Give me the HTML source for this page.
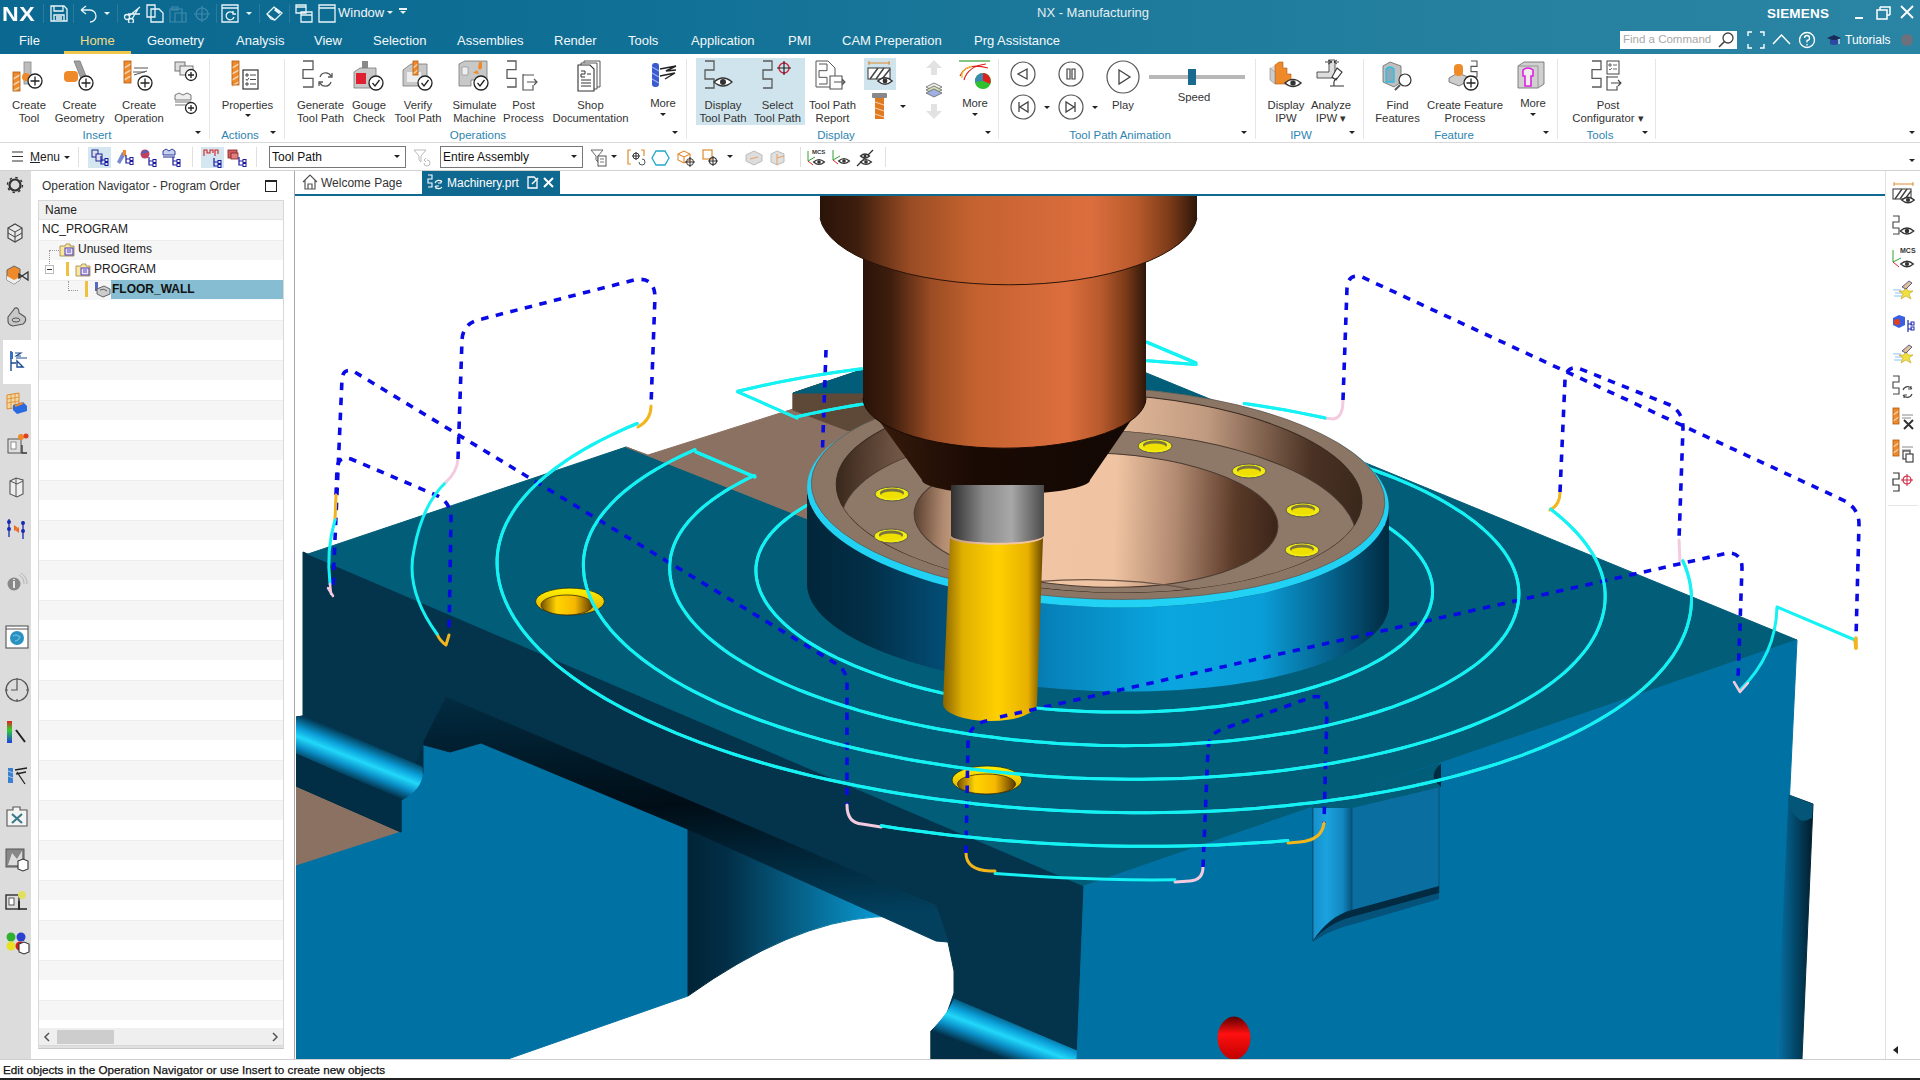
<!DOCTYPE html>
<html><head><meta charset="utf-8">
<style>
*{margin:0;padding:0;box-sizing:border-box}
html,body{width:1920px;height:1080px;overflow:hidden;background:#fff;font-family:"Liberation Sans",sans-serif;}
.a{position:absolute}
#title{left:0;top:0;width:1920px;height:54px;background:linear-gradient(90deg,#0b6890 0%,#0f6f95 30%,#25809f 75%,#2a84a4 100%)}
#ribbon{left:0;top:54px;width:1920px;height:89px;background:#fff;border-bottom:1px solid #d9d9d9}
#tb{left:0;top:143px;width:1920px;height:28px;background:#fff;border-bottom:1px solid #d2d2d2}
#side{left:0;top:171px;width:31px;height:888px;background:#dcdcdc}
#nav{left:31px;top:171px;width:265px;height:888px;background:#fff}
#status{left:0;top:1059px;width:1920px;height:21px;background:#fff;border-top:1px solid #cfcfcf;border-bottom:2px solid #222}
#rside{left:1885px;top:171px;width:35px;height:888px;background:#fff;border-left:1px solid #e0e0e0}
</style></head><body>
<div id="title" class="a"></div>
<div id="ribbon" class="a"></div>
<div id="tb" class="a"></div>
<div id="side" class="a"></div>
<div id="nav" class="a"></div>
<div id="rside" class="a"></div>
<svg class="a" style="left:296px;top:195px" width="1589" height="864" viewBox="296 195 1589 864">
<defs>
<linearGradient id="gRail" x1="362" y1="740" x2="347" y2="778" gradientUnits="userSpaceOnUse"><stop offset="0" stop-color="#023a55"/><stop offset="0.3" stop-color="#0a9ed8"/><stop offset="0.5" stop-color="#22d8fa"/><stop offset="0.72" stop-color="#0a90c8"/><stop offset="1" stop-color="#022e46"/></linearGradient><linearGradient id="gRail2" x1="1010" y1="1015" x2="995" y2="1055" gradientUnits="userSpaceOnUse"><stop offset="0" stop-color="#023a55"/><stop offset="0.3" stop-color="#0a9ed8"/><stop offset="0.5" stop-color="#22d8fa"/><stop offset="0.72" stop-color="#0a90c8"/><stop offset="1" stop-color="#022e46"/></linearGradient>
<linearGradient id="gHole" x1="688" y1="0" x2="944" y2="0" gradientUnits="userSpaceOnUse"><stop offset="0" stop-color="#012436"/><stop offset="0.15" stop-color="#022e46"/><stop offset="0.75" stop-color="#0a9ad2"/><stop offset="1" stop-color="#0b86b8"/></linearGradient>
<linearGradient id="gChan" x1="0" y1="0" x2="0.15" y2="1"><stop offset="0" stop-color="#022c42"/><stop offset="0.5" stop-color="#000d16"/><stop offset="1" stop-color="#02405e"/></linearGradient>
<linearGradient id="gRingSide" x1="807" y1="0" x2="1389" y2="0" gradientUnits="userSpaceOnUse"><stop offset="0" stop-color="#01263a"/><stop offset="0.1" stop-color="#022e46"/><stop offset="0.25" stop-color="#03507a"/><stop offset="0.42" stop-color="#0782ba"/><stop offset="0.62" stop-color="#0aa6e0"/><stop offset="0.78" stop-color="#0a9ed8"/><stop offset="0.9" stop-color="#05628c"/><stop offset="1" stop-color="#012a40"/></linearGradient>
<linearGradient id="gSp" x1="0" y1="0" x2="1" y2="0"><stop offset="0" stop-color="#2a1308"/><stop offset="0.1" stop-color="#3e1e0e"/><stop offset="0.24" stop-color="#9a4c24"/><stop offset="0.4" stop-color="#c4622f"/><stop offset="0.72" stop-color="#dc6e3e"/><stop offset="0.84" stop-color="#b85a2c"/><stop offset="0.93" stop-color="#7a3a18"/><stop offset="1" stop-color="#2e160a"/></linearGradient>
<linearGradient id="gCone" x1="0" y1="0" x2="1" y2="0"><stop offset="0" stop-color="#3a1c0c"/><stop offset="0.4" stop-color="#1a0a04"/><stop offset="1" stop-color="#120804"/></linearGradient>
<linearGradient id="gHold" x1="0" y1="0" x2="1" y2="0"><stop offset="0" stop-color="#303030"/><stop offset="0.35" stop-color="#8a8a8a"/><stop offset="0.65" stop-color="#a8a8a8"/><stop offset="1" stop-color="#4a4a4a"/></linearGradient>
<linearGradient id="gTool" x1="0" y1="0" x2="1" y2="0"><stop offset="0" stop-color="#8a6400"/><stop offset="0.2" stop-color="#e0b000"/><stop offset="0.55" stop-color="#ffd000"/><stop offset="0.85" stop-color="#e8b000"/><stop offset="1" stop-color="#6a4a00"/></linearGradient>
<linearGradient id="gBore" x1="915" y1="0" x2="1280" y2="0" gradientUnits="userSpaceOnUse"><stop offset="0" stop-color="#5a4030"/><stop offset="0.08" stop-color="#b08a70"/><stop offset="0.2" stop-color="#f2c6a4"/><stop offset="0.55" stop-color="#f0c4a2"/><stop offset="0.72" stop-color="#b08870"/><stop offset="0.88" stop-color="#5a3a28"/><stop offset="1" stop-color="#3a2418"/></linearGradient>
<linearGradient id="gInW" x1="836" y1="0" x2="1362" y2="0" gradientUnits="userSpaceOnUse"><stop offset="0" stop-color="#3a281c"/><stop offset="0.1" stop-color="#6a5040"/><stop offset="0.45" stop-color="#f2c6a4"/><stop offset="0.7" stop-color="#c09a80"/><stop offset="0.9" stop-color="#4a3224"/><stop offset="1" stop-color="#3a281c"/></linearGradient>
<linearGradient id="gHoleO" x1="0" y1="0" x2="0" y2="1"><stop offset="0" stop-color="#fff200"/><stop offset="1" stop-color="#e0a800"/></linearGradient><linearGradient id="gHoleI" x1="0" y1="0" x2="1" y2="0"><stop offset="0" stop-color="#7a5000"/><stop offset="0.3" stop-color="#ffd400"/><stop offset="0.65" stop-color="#f6b800"/><stop offset="1" stop-color="#5a3800"/></linearGradient>
<linearGradient id="gRedH" x1="0" y1="0" x2="0" y2="1"><stop offset="0" stop-color="#600000"/><stop offset="0.4" stop-color="#ff1010"/><stop offset="1" stop-color="#c00000"/></linearGradient>
<linearGradient id="gSlot" x1="0" y1="0" x2="1" y2="0"><stop offset="0" stop-color="#1690cc"/><stop offset="0.35" stop-color="#1ba2de"/><stop offset="0.75" stop-color="#1288c2"/><stop offset="1" stop-color="#07547e"/></linearGradient>
<linearGradient id="gRRail" x1="0" y1="0" x2="1" y2="0"><stop offset="0" stop-color="#0872a6"/><stop offset="0.45" stop-color="#034c70"/><stop offset="1" stop-color="#011c2a"/></linearGradient>
</defs>
<rect x="296" y="195" width="1589" height="864" fill="#fff"/>
<polygon points="296,786 401,832 296,866" fill="#8b7161" stroke="#8b7161" stroke-width="1"/>
<polygon points="424,735 401,800 401,832 424,773" fill="#022e45" stroke="#022e45" stroke-width="1"/>
<polygon points="296,866 401,832 401,800 424,773 424,745 450,752 481,743 690,830 688,996 508,1059 296,1059" fill="#0071a3" stroke="#0071a3" stroke-width="1"/>
<path d="M688,826 L936,937 L948,942 Q920,913 875,917 Q790,923 688,996 Z" fill="url(#gHole)" stroke="url(#gHole)" stroke-width="1"/>
<polygon points="303,552 1084,884 1077,1059 931,1059 931,1031 945,1019 954,993 954,971 948,942 936,906 880,882 690,801 446,697 424,741 401,800 401,832 296,786 296,717 303,716" fill="#03344c" stroke="#03344c" stroke-width="1"/>
<polygon points="446,697 690,801 880,882 936,906 948,942 936,941 690,830 481,743 450,752 424,745 424,741" fill="url(#gChan)" stroke="url(#gChan)" stroke-width="1"/>
<path d="M296,717 L303,716 L422,767 C424,780 418,792 401,800 L296,754 Z" fill="url(#gRail)" stroke="url(#gRail)" stroke-width="1"/>
<polygon points="296,754 401,800 401,832 296,786" fill="#022e45" stroke="#022e45" stroke-width="1"/>
<path d="M931,1031 C940,1022 950,1010 954,999 L1077,1051 L1077,1059 L931,1059 Z" fill="url(#gRail2)" stroke="url(#gRail2)" stroke-width="1"/>
<polygon points="308,554 626,447 805,518 870,520 1000,420 1144,372 1797,640 1084,886" fill="#025d78" stroke="#025d78" stroke-width="1"/>
<polygon points="626,447 648,455 793,409 793,393 861,370 880,372 880,540 805,518" fill="#8b7161" stroke="#8b7161" stroke-width="1"/>
<polygon points="793,393 880,364 880,437 846,430 793,410" fill="#5e4838" stroke="#5e4838" stroke-width="1"/>
<polygon points="793,393 861,370 900,356 900,372 863,393" fill="#025d78" stroke="#025d78" stroke-width="1"/>
<polygon points="1084,886 1797,640 1777,1059 1077,1059" fill="#0071a3" stroke="#0071a3" stroke-width="1"/>
<polygon points="1313,807 1439,764 1439,893 1352,917 1313,941" fill="#0a6fa0" stroke="#044a6a" stroke-width="0.8"/>
<path d="M1313,807 L1352,794 L1352,917 C1335,921 1320,930 1313,941 Z" fill="url(#gSlot)" stroke="#044a6a" stroke-width="0.8"/>
<path d="M1313,941 C1322,926 1336,914 1352,910 L1439,886 L1439,893 L1352,917 C1336,921 1322,930 1313,941 Z" fill="#022a40"/>
<path d="M1313,941 C1322,930 1336,921 1352,917 L1439,893 L1439,899 L1354,924 C1338,928 1324,934 1313,941 Z" fill="#05527a"/>
<polygon points="1310,808 1441,763 1441,787 1352,808" fill="#025d78"/>
<path d="M1441,764 Q1432,770 1434,780 L1441,787 Z" fill="#022a40"/>
<polygon points="1789,795 1813,804 1802,1059 1777,1059" fill="url(#gRRail)" stroke="url(#gRRail)" stroke-width="1"/>
<path d="M1789,795 L1813,804 L1812,818 Q1805,822 1800,820 Q1792,814 1789,805 Z" fill="#035678"/>
<ellipse cx="1234" cy="1038" rx="16" ry="21" fill="url(#gRedH)" stroke="url(#gRedH)" stroke-width="1"/>
<ellipse cx="570" cy="601.5" rx="34.4" ry="13.4" fill="url(#gHoleO)" stroke="#1a2a20" stroke-width="0.8"/>
<ellipse cx="567" cy="605" rx="26" ry="10" fill="url(#gHoleI)" stroke="#3a3010" stroke-width="0.8"/>
<ellipse cx="987" cy="780" rx="35" ry="14" fill="url(#gHoleO)" stroke="#1a2a20" stroke-width="0.8"/>
<ellipse cx="986.5" cy="784" rx="29" ry="10" fill="url(#gHoleI)" stroke="#3a3010" stroke-width="0.8"/>
<path d="M1094.0,454.6 L1102.9,455.0 L1111.7,455.3 L1120.6,455.8 L1129.4,456.4 L1138.2,457.1 L1147.0,457.8 L1155.7,458.6 L1164.4,459.5 L1173.0,460.5 L1181.6,461.6 L1190.1,462.7 L1198.6,464.0 L1207.0,465.3 L1215.3,466.7 L1223.5,468.2 L1231.7,469.7 L1239.7,471.3 L1247.7,473.0 L1255.5,474.8 L1263.2,476.6 L1270.9,478.6 L1278.3,480.5 L1285.7,482.6 L1293.0,484.7 L1300.1,486.9 L1307.0,489.2 L1313.8,491.5 L1320.5,493.9 L1327.0,496.3 L1333.4,498.8 L1339.5,501.3 L1345.6,503.9 L1351.4,506.6 L1357.1,509.3 L1362.6,512.1 L1367.9,514.9 L1373.0,517.7 L1377.9,520.6 L1382.6,523.5 L1387.2,526.5 L1391.5,529.5 L1395.6,532.5 L1399.6,535.6 L1403.3,538.7 L1406.8,541.9 L1410.1,545.0 L1413.1,548.2 L1416.0,551.4 L1418.6,554.7 L1421.0,557.9 L1423.2,561.2 L1425.2,564.4 L1426.9,567.7 L1428.4,571.0 L1429.7,574.3 L1430.7,577.6 L1431.6,580.9 L1432.2,584.2 L1432.5,587.5 L1432.6,590.8 L1432.5,594.3 L1432.2,597.7 L1431.6,601.1 L1430.8,604.5 L1429.8,607.9 L1428.5,611.2 L1427.0,614.6 L1425.3,617.9 L1423.3,621.2 L1421.2,624.4 L1418.8,627.7 L1416.1,630.9 L1413.3,634.0 L1410.2,637.2 L1407.0,640.2 L1403.5,643.3 L1399.8,646.3 L1395.9,649.3 L1391.7,652.2 L1387.4,655.0 L1382.9,657.9 L1378.2,660.6 L1373.3,663.3 L1368.2,666.0 L1362.9,668.6 L1357.4,671.1 L1351.7,673.6 L1345.9,676.0 L1339.9,678.3 L1333.7,680.6 L1327.4,682.8 L1320.9,684.9 L1314.2,687.0 L1307.4,689.0 L1300.5,690.9 L1293.4,692.7 L1286.1,694.5 L1278.8,696.2 L1271.3,697.8 L1263.7,699.3 L1255.9,700.7 L1248.1,702.1 L1240.2,703.4 L1232.1,704.6 L1224.0,705.7 L1215.8,706.7 L1207.5,707.6 L1199.1,708.5 L1190.6,709.2 L1182.1,709.9 L1173.5,710.5 L1164.9,711.0 L1156.2,711.4 L1147.5,711.7 L1138.7,711.9 L1129.9,712.1 L1121.1,712.1 L1112.2,712.1 L1103.4,711.9 L1094.5,711.7 L1085.7,711.4 L1076.8,711.0 L1068.0,710.5 L1059.2,709.9 L1050.4,709.3 L1041.6,708.5 L1032.9,707.7 L1024.2,706.7 L1015.5,705.7 L1007.0,704.6 L998.4,703.4 L990.0,702.1 L981.6,700.8 L973.3,699.3 L965.0,697.8 L956.9,696.2 L948.8,694.5 L940.9,692.8 L933.1,690.9 L925.3,689.0 L917.7,687.0 L910.2,685.0 L902.8,682.8 L895.6,680.6 L888.5,678.4 L881.5,676.0 L874.7,673.6 L868.1,671.2 L861.6,668.6 L855.2,666.1 L849.0,663.4 L843.0,660.7 L837.2,658.0 L831.5,655.1 L826.0,652.3 L820.7,649.4 L815.6,646.4 L810.7,643.4 L805.9,640.4 L801.4,637.3 L797.1,634.1 L792.9,631.0 L789.0,627.8 L785.3,624.6 L781.8,621.3 L778.5,618.0 L775.4,614.7 L772.6,611.4 L769.9,608.0 L767.5,604.6 L765.3,601.2 L763.4,597.8 L761.6,594.4 L760.1,591.0 L758.9,587.5 L757.8,584.1 L757.0,580.7 L756.4,577.2 L756.1,573.8 L755.9,570.3 L756.0,567.0 L756.4,563.8 L757.0,560.5 L757.8,557.2 L758.8,554.0 L760.1,550.8 L761.5,547.6 L763.3,544.4 L765.2,541.2 L767.4,538.1 L769.8,535.0 L772.4,531.9 L775.3,528.9 L778.3,525.9 L781.6,522.9 L785.1,520.0 L788.8,517.1 L792.7,514.3 L796.8,511.5 L801.1,508.7 L805.7,506.0 L810.4,503.4 L815.3,500.8 L820.4,498.3 L825.7,495.8 L831.2,493.4 L836.8,491.0 L842.7,488.7 L848.7,486.5 L854.9,484.3 L861.2,482.2 L867.7,480.1 L874.3,478.2 L881.2,476.3 L888.1,474.4 L895.2,472.7 L902.4,471.0 L909.8,469.4 L917.3,467.8 L924.9,466.4 L932.6,465.0 L940.4,463.7 L948.4,462.5 L956.4,461.4 L964.6,460.3 L972.8,459.3 L981.1,458.4 L989.5,457.6 L997.9,456.9 L1006.5,456.3 L1015.0,455.7 L1023.7,455.3 L1032.4,454.9 L1041.1,454.6 L1049.9,454.4 L1058.7,454.3 L1067.5,454.2 L1076.3,454.3 L1085.2,454.4 L1094.0,454.6" fill="none" stroke="#16f2f4" stroke-width="3" stroke-linecap="round" stroke-linejoin="round"/>
<path d="M754.3,475.5 L747.7,478.6 L741.4,481.9 L735.3,485.2 L729.5,488.5 L723.9,491.9 L718.6,495.4 L713.5,499.0 L708.7,502.6 L704.2,506.2 L699.9,509.9 L695.9,513.7 L692.2,517.5 L688.7,521.3 L685.6,525.2 L682.7,529.1 L680.1,533.1 L677.8,537.0 L675.7,541.1 L674.0,545.1 L672.6,549.2 L671.4,553.3 L670.5,557.4 L670.0,561.5 L669.7,565.6 L669.7,569.9 L670.0,574.2 L670.6,578.5 L671.5,582.9 L672.6,587.2 L674.1,591.5 L675.9,595.9 L677.9,600.2 L680.2,604.5 L682.9,608.7 L685.8,613.0 L688.9,617.2 L692.4,621.5 L696.1,625.6 L700.2,629.8 L704.4,633.9 L709.0,638.0 L713.8,642.0 L718.9,646.0 L724.2,650.0 L729.8,653.9 L735.7,657.8 L741.8,661.6 L748.1,665.3 L754.7,669.0 L761.5,672.6 L768.5,676.2 L775.8,679.7 L783.3,683.1 L791.0,686.5 L798.9,689.8 L807.0,693.0 L815.3,696.1 L823.8,699.2 L832.5,702.1 L841.4,705.0 L850.4,707.8 L859.6,710.6 L869.0,713.2 L878.5,715.7 L888.2,718.2 L898.0,720.5 L907.9,722.8 L918.0,724.9 L928.2,727.0 L938.5,728.9 L949.0,730.8 L959.5,732.5 L970.1,734.2 L980.8,735.7 L991.6,737.1 L1002.4,738.4 L1013.4,739.7 L1024.3,740.8 L1035.3,741.8 L1046.4,742.6 L1057.5,743.4 L1068.6,744.1 L1079.7,744.6 L1090.9,745.0 L1102.0,745.4 L1113.2,745.6 L1124.3,745.7 L1135.4,745.6 L1146.5,745.5 L1157.5,745.3 L1168.5,744.9 L1179.5,744.4 L1190.4,743.8 L1201.2,743.1 L1212.0,742.3 L1222.6,741.4 L1233.2,740.4 L1243.7,739.2 L1254.1,737.9 L1264.4,736.6 L1274.5,735.1 L1284.5,733.5 L1294.4,731.9 L1304.2,730.1 L1313.8,728.2 L1323.3,726.2 L1332.6,724.1 L1341.7,721.9 L1350.7,719.6 L1359.5,717.2 L1368.1,714.7 L1376.5,712.2 L1384.8,709.5 L1392.8,706.8 L1400.6,703.9 L1408.2,701.0 L1415.6,698.0 L1422.8,694.9 L1429.8,691.7 L1436.5,688.5 L1443.0,685.2 L1449.2,681.8 L1455.2,678.3 L1461.0,674.8 L1466.4,671.2 L1471.7,667.6 L1476.7,663.9 L1481.4,660.1 L1485.8,656.3 L1490.0,652.4 L1493.9,648.5 L1497.5,644.5 L1500.9,640.5 L1504.0,636.4 L1506.8,632.3 L1509.3,628.2 L1511.5,624.0 L1513.4,619.8 L1515.1,615.6 L1516.4,611.4 L1517.5,607.1 L1518.3,602.8 L1518.7,598.5 L1518.9,594.2 L1518.8,590.0 L1518.4,585.8 L1517.7,581.7 L1516.7,577.5 L1515.5,573.4 L1513.9,569.2 L1512.1,565.0 L1509.9,560.9 L1507.5,556.8 L1504.8,552.7 L1501.8,548.6 L1498.5,544.5 L1494.9,540.5 L1491.1,536.5 L1487.0,532.5 L1482.6,528.5 L1478.0,524.6 L1473.1,520.7 L1467.9,516.9 L1462.5,513.1 L1456.8,509.4 L1450.9,505.7 L1444.7,502.0 L1438.3,498.4 L1431.6,494.9 L1424.8,491.4 L1417.6,488.0 L1410.3,484.7 L1402.7,481.4 L1395.0,478.2 L1387.0,475.0 L1378.8,472.0 L1370.5,469.0 L1361.9,466.1 L1353.1,463.2 L1344.2,460.5 L1335.1,457.8 L1325.9,455.2 L1316.4,452.7 L1306.9,450.3 L1297.1,447.9 L1287.3,445.7 L1277.3,443.6 L1267.2,441.5 L1256.9,439.6 L1246.6,437.7 L1236.1,435.9 L1225.6,434.3 L1214.9,432.7 L1204.2,431.3 L1193.4,429.9 L1182.5,428.7 L1171.6,427.5 L1160.6,426.5 L1149.5,425.6 L1138.5,424.7 L1127.4,424.0 L1116.2,423.4 L1105.1,422.9 L1094.0,422.5" fill="none" stroke="#16f2f4" stroke-width="3" stroke-linecap="round" stroke-linejoin="round"/>
<path d="M1550.8,509.1 L1556.6,513.8 L1562.2,518.5 L1567.4,523.3 L1572.3,528.1 L1576.9,532.9 L1581.1,537.8 L1585.0,542.7 L1588.6,547.6 L1591.8,552.5 L1594.7,557.5 L1597.2,562.5 L1599.4,567.5 L1601.3,572.5 L1602.8,577.5 L1603.9,582.5 L1604.7,587.5 L1605.1,592.5 L1605.2,597.6 L1604.9,602.8 L1604.3,608.0 L1603.3,613.1 L1602.0,618.3 L1600.3,623.4 L1598.3,628.4 L1596.0,633.5 L1593.2,638.5 L1590.2,643.5 L1586.8,648.4 L1583.0,653.3 L1578.9,658.1 L1574.5,662.9 L1569.8,667.6 L1564.7,672.3 L1559.3,676.9 L1553.6,681.4 L1547.6,685.8 L1541.2,690.2 L1534.6,694.5 L1527.6,698.8 L1520.3,702.9 L1512.8,707.0 L1504.9,711.0 L1496.8,714.9 L1488.4,718.7 L1479.7,722.4 L1470.8,726.0 L1461.6,729.5 L1452.1,732.9 L1442.4,736.2 L1432.5,739.4 L1422.3,742.4 L1411.9,745.4 L1401.3,748.3 L1390.5,751.0 L1379.4,753.6 L1368.2,756.1 L1356.8,758.5 L1345.2,760.8 L1333.4,762.9 L1321.4,764.9 L1309.4,766.8 L1297.1,768.5 L1284.7,770.2 L1272.2,771.7 L1259.6,773.0 L1246.8,774.2 L1233.9,775.3 L1221.0,776.3 L1208.0,777.1 L1194.8,777.8 L1181.6,778.4 L1168.4,778.8 L1155.1,779.1 L1141.7,779.2 L1128.4,779.2 L1115.0,779.1 L1101.5,778.8 L1088.1,778.4 L1074.7,777.9 L1061.3,777.2 L1047.9,776.4 L1034.6,775.4 L1021.3,774.3 L1008.0,773.1 L994.8,771.8 L981.7,770.3 L968.6,768.7 L955.7,766.9 L942.8,765.1 L930.1,763.1 L917.4,760.9 L904.9,758.7 L892.5,756.3 L880.2,753.8 L868.1,751.2 L856.2,748.5 L844.4,745.6 L832.7,742.7 L821.3,739.6 L810.1,736.4 L799.0,733.1 L788.2,729.8 L777.5,726.3 L767.1,722.7 L756.9,719.0 L746.9,715.2 L737.2,711.3 L727.8,707.3 L718.5,703.3 L709.6,699.1 L700.9,694.9 L692.4,690.6 L684.3,686.2 L676.4,681.8 L668.8,677.2 L661.6,672.6 L654.6,668.0 L647.9,663.3 L641.5,658.5 L635.5,653.7 L629.7,648.8 L624.3,643.9 L619.2,638.9 L614.4,633.9 L610.0,628.9 L605.9,623.8 L602.1,618.7 L598.7,613.5 L595.6,608.4 L592.8,603.2 L590.4,598.0 L588.4,592.8 L586.7,587.6 L585.3,582.4 L584.3,577.2 L583.7,572.0 L583.4,566.8 L583.4,561.7 L583.8,556.7 L584.6,551.7 L585.7,546.8 L587.2,541.9 L589.0,537.0 L591.1,532.1 L593.6,527.3 L596.5,522.5 L599.7,517.7 L603.2,513.0 L607.1,508.4 L611.3,503.8 L615.8,499.2 L620.7,494.7 L625.9,490.2 L631.4,485.9 L637.3,481.5 L643.5,477.3 L649.9,473.1 L656.7,469.0 L663.8,465.0 L671.2,461.0 L678.8,457.2 L686.8,453.4 L695.0,449.7" fill="none" stroke="#16f2f4" stroke-width="3" stroke-linecap="round" stroke-linejoin="round"/>
<path d="M796.9,416.8 L809.7,413.9 L822.7,411.2 L835.9,408.6 L849.4,406.2 L863.2,403.9" fill="none" stroke="#16f2f4" stroke-width="3" stroke-linecap="round" stroke-linejoin="round"/>
<path d="M1244.2,403.4 L1258.0,405.4 L1271.7,407.7 L1285.3,410.0 L1298.8,412.6 L1312.0,415.2 L1325.1,418.0" fill="none" stroke="#16f2f4" stroke-width="3" stroke-linecap="round" stroke-linejoin="round"/>
<path d="M1682.8,560.8 L1685.3,566.6 L1687.3,572.5 L1689.0,578.3 L1690.2,584.2 L1691.0,590.0 L1691.5,595.8 L1691.5,601.8 L1691.1,607.8 L1690.3,613.9 L1689.0,619.9 L1687.4,625.9 L1685.4,631.8 L1682.9,637.7 L1680.1,643.6 L1676.8,649.5 L1673.2,655.3 L1669.1,661.0 L1664.7,666.7 L1659.8,672.3 L1654.6,677.9 L1649.0,683.4 L1643.0,688.8 L1636.6,694.1 L1629.9,699.4 L1622.8,704.6 L1615.3,709.7 L1607.4,714.7 L1599.3,719.6 L1590.7,724.5 L1581.9,729.2 L1572.6,733.8 L1563.1,738.3 L1553.2,742.7 L1543.1,747.0 L1532.6,751.2 L1521.8,755.3 L1510.7,759.2 L1499.3,763.1 L1487.7,766.8 L1475.8,770.3 L1463.6,773.8 L1451.2,777.1 L1438.5,780.3 L1425.6,783.3 L1412.4,786.2 L1399.1,789.0 L1385.5,791.6 L1371.7,794.0 L1357.8,796.4 L1343.6,798.5 L1329.3,800.6 L1314.9,802.4 L1300.2,804.1 L1285.5,805.7 L1270.6,807.1 L1255.5,808.4 L1240.4,809.5 L1225.2,810.4 L1209.9,811.2 L1194.5,811.8 L1179.0,812.3 L1163.5,812.6 L1147.9,812.7 L1132.3,812.7 L1116.6,812.6 L1101.0,812.2 L1085.3,811.7 L1069.7,811.1 L1054.0,810.3 L1038.4,809.3 L1022.8,808.2 L1007.3,806.9 L991.9,805.5 L976.5,803.9 L961.2,802.1 L945.9,800.2 L930.8,798.2 L915.8,796.0 L900.9,793.7 L886.2,791.2 L871.6,788.5 L857.1,785.8 L842.9,782.8 L828.7,779.8 L814.8,776.6 L801.1,773.3 L787.5,769.8 L774.2,766.2 L761.1,762.5 L748.2,758.6 L735.6,754.7 L723.2,750.6 L711.0,746.4 L699.1,742.1 L687.5,737.6 L676.2,733.1 L665.2,728.4 L654.4,723.7 L644.0,718.9 L633.9,713.9 L624.0,708.9 L614.6,703.8 L605.4,698.6 L596.6,693.3 L588.1,687.9 L580.0,682.5 L572.2,677.0 L564.7,671.4 L557.7,665.8 L551.0,660.1 L544.7,654.3 L538.7,648.6 L533.2,642.7 L528.0,636.8 L523.2,630.9 L518.8,624.9 L514.8,618.9 L511.3,612.9 L508.1,606.9 L505.3,600.8 L502.9,594.8 L500.9,588.7 L499.3,582.6 L498.2,576.5 L497.4,570.4 L497.1,564.4 L497.1,558.4 L497.6,552.6 L498.5,546.8 L499.8,541.1 L501.5,535.3 L503.6,529.6 L506.1,523.9 L509.1,518.3 L512.4,512.7 L516.1,507.2 L520.2,501.7 L524.8,496.2 L529.7,490.8 L535.0,485.5 L540.6,480.3 L546.7,475.1 L553.2,470.0 L560.0,464.9 L567.1,460.0 L574.7,455.1 L582.6,450.3 L590.8,445.6 L599.4,441.0 L608.4,436.5 L617.6,432.1 L627.2,427.7 L637.2,423.5" fill="none" stroke="#16f2f4" stroke-width="3" stroke-linecap="round" stroke-linejoin="round"/>
<path d="M737.8,391.3 L750.9,388.2 L764.2,385.2 L777.8,382.4 L791.6,379.7 L805.6,377.1 L819.9,374.7 L834.3,372.5 L848.9,370.4 L863.7,368.5 L878.7,366.7 L893.8,365.0 L909.1,363.6 L924.5,362.3 L940.0,361.1 L955.7,360.1 L971.4,359.3 L987.3,358.6 L1003.2,358.1 L1019.2,357.7 L1035.2,357.6 L1051.3,357.5 L1067.4,357.7 L1083.5,358.0 L1099.7,358.5 L1115.8,359.1 L1131.9,359.9 L1148.0,360.8 L1164.1,361.9 L1180.1,363.2 L1196.0,364.6" fill="none" stroke="#16f2f4" stroke-width="3" stroke-linecap="round" stroke-linejoin="round"/>
<path d="M881.3,825.8 L898.4,828.4 L915.7,830.8 L933.0,833.1 L950.5,835.2 L968.1,837.1 L985.8,838.8 L1003.6,840.4 L1021.4,841.7 L1039.2,842.9 L1057.2,844.0 L1075.1,844.8 L1093.0,845.4 L1111.0,845.9 L1128.9,846.2 L1146.8,846.3 L1164.7,846.2 L1182.5,846.0 L1200.3,845.5 L1218.0,844.9 L1235.6,844.1 L1253.1,843.1 L1270.5,841.9 L1287.8,840.6" fill="none" stroke="#16f2f4" stroke-width="3" stroke-linecap="round" stroke-linejoin="round"/>
<path d="M738,392 L797,418" fill="none" stroke="#16f2f4" stroke-width="3" stroke-linecap="round" stroke-linejoin="round"/>
<path d="M696,452 L755,477" fill="none" stroke="#16f2f4" stroke-width="3" stroke-linecap="round" stroke-linejoin="round"/>
<path d="M1144,341 L1196,363" fill="none" stroke="#16f2f4" stroke-width="3" stroke-linecap="round" stroke-linejoin="round"/>
<path d="M826,350 L820,520" fill="none" stroke="#0a0ae6" stroke-width="3.6" stroke-dasharray="7.5 7.5"/>
<path d="M807,486 L807,583 A291,97 2.2 0 0 1389,605 L1389,508 A291,110 2.2 0 1 807,486 Z" fill="url(#gRingSide)"/>
<g transform="rotate(2.2 1098 495)">
<ellipse cx="1098" cy="497" rx="291" ry="110" fill="#22d2f4"/>
<ellipse cx="1098" cy="493" rx="287" ry="106" fill="#8b7565" stroke="#5a4a40" stroke-width="0.6"/>
<clipPath id="cpIn"><ellipse cx="1099" cy="493" rx="263" ry="99"/></clipPath>
<ellipse cx="1099" cy="493" rx="263" ry="99" fill="url(#gInW)" stroke="#3a2a20" stroke-width="1"/>
<g clip-path="url(#cpIn)"><ellipse cx="1100" cy="530" rx="258" ry="100" fill="#8e7868" stroke="#4a3a30" stroke-width="1"/>
<ellipse cx="1097" cy="520" rx="182" ry="67" fill="url(#gBore)" stroke="#4a3a30" stroke-width="1"/>
<path d="M1040,584 Q1120,574 1200,586" fill="none" stroke="#6a5446" stroke-width="1.2"/></g>
</g>
<ellipse cx="892" cy="494" rx="17" ry="7" fill="#f2ea10" stroke="#5a5a50" stroke-width="1"/>
<ellipse cx="892" cy="493" rx="12" ry="4.6" fill="#7a7440"/>
<ellipse cx="892" cy="495" rx="11" ry="3.4" fill="#f0e000"/>
<ellipse cx="891" cy="536" rx="17" ry="7" fill="#f2ea10" stroke="#5a5a50" stroke-width="1"/>
<ellipse cx="891" cy="535" rx="12" ry="4.6" fill="#7a7440"/>
<ellipse cx="891" cy="537" rx="11" ry="3.4" fill="#f0e000"/>
<ellipse cx="1155" cy="446" rx="17" ry="7" fill="#f2ea10" stroke="#5a5a50" stroke-width="1"/>
<ellipse cx="1155" cy="445" rx="12" ry="4.6" fill="#7a7440"/>
<ellipse cx="1155" cy="447" rx="11" ry="3.4" fill="#f0e000"/>
<ellipse cx="1249" cy="471" rx="17" ry="7" fill="#f2ea10" stroke="#5a5a50" stroke-width="1"/>
<ellipse cx="1249" cy="470" rx="12" ry="4.6" fill="#7a7440"/>
<ellipse cx="1249" cy="472" rx="11" ry="3.4" fill="#f0e000"/>
<ellipse cx="1303" cy="510" rx="17" ry="7" fill="#f2ea10" stroke="#5a5a50" stroke-width="1"/>
<ellipse cx="1303" cy="509" rx="12" ry="4.6" fill="#7a7440"/>
<ellipse cx="1303" cy="511" rx="11" ry="3.4" fill="#f0e000"/>
<ellipse cx="1302" cy="550" rx="17" ry="7" fill="#f2ea10" stroke="#5a5a50" stroke-width="1"/>
<ellipse cx="1302" cy="549" rx="12" ry="4.6" fill="#7a7440"/>
<ellipse cx="1302" cy="551" rx="11" ry="3.4" fill="#f0e000"/>
<path d="M864,400 L922,480 A84,14 0 0 0 1090,480 L1145,400 Z" fill="url(#gCone)"/>
<path d="M863,250 L863,398 A141,50 0 0 0 1146,398 L1146,250 Z" fill="url(#gSp)"/>
<path d="M863,398 A141,50 0 0 0 1146,398" fill="none" stroke="#1a0a04" stroke-width="1"/>
<path d="M820,195 L820,218 A189,72 0 0 0 1197,218 L1197,195 Z" fill="url(#gSp)"/>
<path d="M820,218 A189,72 0 0 0 1197,218" fill="none" stroke="#2a1408" stroke-width="1"/>
<path d="M951,485 L951,536 A47,8 0 0 0 1044,536 L1044,485 Z" fill="url(#gHold)"/>
<path d="M950,538 L943,704 A47,17 0 0 0 1037,704 L1043,538 A47,8 0 0 1 950,538 Z" fill="url(#gTool)"/>
<path d="M333,585 L342,379 Q343,368 353,371 L835,663 Q847,670 847,684 L847,805" fill="none" stroke="#0a0ae6" stroke-width="3.6" stroke-dasharray="7.5 7.5"/>
<path d="M847,805 Q847,823 862,824 L881,827" fill="none" stroke="#f4cade" stroke-width="3" stroke-linecap="round" stroke-linejoin="round"/>
<path d="M336,495 L337,468 Q339,455 351,459 L438,496 Q451,503 451,518 L449,635" fill="none" stroke="#0a0ae6" stroke-width="3.6" stroke-dasharray="7.5 7.5"/>
<path d="M449,635 L446,645 Q440,641 437,634" fill="none" stroke="#f2b51c" stroke-width="3" stroke-linecap="round" stroke-linejoin="round"/>
<path d="M336,495 L335,520" fill="none" stroke="#f2b51c" stroke-width="3" stroke-linecap="round" stroke-linejoin="round"/>
<path d="M335,520 Q326,550 330,584" fill="none" stroke="#16f2f4" stroke-width="3" stroke-linecap="round" stroke-linejoin="round"/>
<path d="M330,584 L331,594 M328,588 L333,596" fill="none" stroke="#f4cade" stroke-width="2.5" stroke-linecap="round" stroke-linejoin="round"/>
<path d="M437,634 Q405,590 414,550 Q422,505 446,482" fill="none" stroke="#16f2f4" stroke-width="3" stroke-linecap="round" stroke-linejoin="round"/>
<path d="M446,482 Q457,472 458,459" fill="none" stroke="#f4cade" stroke-width="3" stroke-linecap="round" stroke-linejoin="round"/>
<path d="M458,459 L462,340 Q463,322 482,319 L634,280 Q654,276 655,296 L651,406" fill="none" stroke="#0a0ae6" stroke-width="3.6" stroke-dasharray="7.5 7.5"/>
<path d="M651,406 Q651,420 638,427" fill="none" stroke="#f2b51c" stroke-width="3" stroke-linecap="round" stroke-linejoin="round"/>
<path d="M1325,418 L1333,419 Q1343,418 1343,400" fill="none" stroke="#f4cade" stroke-width="3" stroke-linecap="round" stroke-linejoin="round"/>
<path d="M1343,400 L1347,288 Q1348,273 1362,277 L1843,500 Q1859,508 1859,524 L1856,638" fill="none" stroke="#0a0ae6" stroke-width="3.6" stroke-dasharray="7.5 7.5"/>
<path d="M1856,638 L1856,648" fill="none" stroke="#f2b51c" stroke-width="3.5" stroke-linecap="round" stroke-linejoin="round"/>
<path d="M1550,510 Q1560,505 1560,492" fill="none" stroke="#f2b51c" stroke-width="3" stroke-linecap="round" stroke-linejoin="round"/>
<path d="M1560,492 L1565,380 Q1566,366 1578,368 L1670,405 Q1683,412 1683,428 L1679,540" fill="none" stroke="#0a0ae6" stroke-width="3.6" stroke-dasharray="7.5 7.5"/>
<path d="M1679,540 L1680,562" fill="none" stroke="#f4cade" stroke-width="3" stroke-linecap="round" stroke-linejoin="round"/>
<path d="M1740,690 Q1776,655 1777,607 L1855,640" fill="none" stroke="#16f2f4" stroke-width="3" stroke-linecap="round" stroke-linejoin="round"/>
<path d="M1855,640 L1856,648" fill="none" stroke="#f2b51c" stroke-width="3.5" stroke-linecap="round" stroke-linejoin="round"/>
<path d="M1175,882 L1190,881 Q1203,880 1203,867" fill="none" stroke="#f4cade" stroke-width="3" stroke-linecap="round" stroke-linejoin="round"/>
<path d="M1203,867 L1208,749 Q1209,733 1223,729 L1312,697 Q1327,694 1327,710 L1324,823" fill="none" stroke="#0a0ae6" stroke-width="3.6" stroke-dasharray="7.5 7.5"/>
<path d="M1324,823 Q1322,840 1300,842 L1288,843" fill="none" stroke="#f2b51c" stroke-width="3" stroke-linecap="round" stroke-linejoin="round"/>
<path d="M1174.7,879.8 L1152.2,879.9 L1129.8,879.7 L1107.3,879.3 L1084.8,878.6 L1062.3,877.7 L1039.8,876.5 L1017.4,875.1 L995.0,873.4" fill="none" stroke="#16f2f4" stroke-width="3" stroke-linecap="round" stroke-linejoin="round"/>
<path d="M966,853 Q966,870 990,871 L995,871" fill="none" stroke="#f2b51c" stroke-width="3" stroke-linecap="round" stroke-linejoin="round"/>
<path d="M966,853 L968,742 Q969,722 992,720" fill="none" stroke="#0a0ae6" stroke-width="3.6" stroke-dasharray="7.5 7.5"/>
<path d="M1000,717 L1728,553 Q1742,553 1742,568 L1738,680" fill="none" stroke="#0a0ae6" stroke-width="3.6" stroke-dasharray="7.5 7.5"/>
<path d="M1734,682 L1740,692 L1748,683" fill="none" stroke="#f4cade" stroke-width="2.5" stroke-linecap="round" stroke-linejoin="round"/>
<mask id="mArc" maskUnits="userSpaceOnUse" x="296" y="195" width="1589" height="864"><rect x="296" y="195" width="1589" height="864" fill="#fff"/><path d="M807,486 L807,583 A291,97 2.2 0 0 1389,605 L1389,508 A291,110 2.2 0 1 807,486 Z" fill="#000"/><ellipse cx="1098" cy="497" rx="293" ry="112" transform="rotate(2.2 1098 495)" fill="#000"/><rect x="818" y="195" width="381" height="98" fill="#000"/><rect x="861" y="195" width="287" height="255" fill="#000"/><polygon points="862,398 1147,398 1092,496 920,496" fill="#000"/><polygon points="948,484 1046,484 1040,724 940,724" fill="#000"/></mask>
<g mask="url(#mArc)"><path d="M1094.0,454.6 L1102.9,455.0 L1111.7,455.3 L1120.6,455.8 L1129.4,456.4 L1138.2,457.1 L1147.0,457.8 L1155.7,458.6 L1164.4,459.5 L1173.0,460.5 L1181.6,461.6 L1190.1,462.7 L1198.6,464.0 L1207.0,465.3 L1215.3,466.7 L1223.5,468.2 L1231.7,469.7 L1239.7,471.3 L1247.7,473.0 L1255.5,474.8 L1263.2,476.6 L1270.9,478.6 L1278.3,480.5 L1285.7,482.6 L1293.0,484.7 L1300.1,486.9 L1307.0,489.2 L1313.8,491.5 L1320.5,493.9 L1327.0,496.3 L1333.4,498.8 L1339.5,501.3 L1345.6,503.9 L1351.4,506.6 L1357.1,509.3 L1362.6,512.1 L1367.9,514.9 L1373.0,517.7 L1377.9,520.6 L1382.6,523.5 L1387.2,526.5 L1391.5,529.5 L1395.6,532.5 L1399.6,535.6 L1403.3,538.7 L1406.8,541.9 L1410.1,545.0 L1413.1,548.2 L1416.0,551.4 L1418.6,554.7 L1421.0,557.9 L1423.2,561.2 L1425.2,564.4 L1426.9,567.7 L1428.4,571.0 L1429.7,574.3 L1430.7,577.6 L1431.6,580.9 L1432.2,584.2 L1432.5,587.5 L1432.6,590.8 L1432.5,594.3 L1432.2,597.7 L1431.6,601.1 L1430.8,604.5 L1429.8,607.9 L1428.5,611.2 L1427.0,614.6 L1425.3,617.9 L1423.3,621.2 L1421.2,624.4 L1418.8,627.7 L1416.1,630.9 L1413.3,634.0 L1410.2,637.2 L1407.0,640.2 L1403.5,643.3 L1399.8,646.3 L1395.9,649.3 L1391.7,652.2 L1387.4,655.0 L1382.9,657.9 L1378.2,660.6 L1373.3,663.3 L1368.2,666.0 L1362.9,668.6 L1357.4,671.1 L1351.7,673.6 L1345.9,676.0 L1339.9,678.3 L1333.7,680.6 L1327.4,682.8 L1320.9,684.9 L1314.2,687.0 L1307.4,689.0 L1300.5,690.9 L1293.4,692.7 L1286.1,694.5 L1278.8,696.2 L1271.3,697.8 L1263.7,699.3 L1255.9,700.7 L1248.1,702.1 L1240.2,703.4 L1232.1,704.6 L1224.0,705.7 L1215.8,706.7 L1207.5,707.6 L1199.1,708.5 L1190.6,709.2 L1182.1,709.9 L1173.5,710.5 L1164.9,711.0 L1156.2,711.4 L1147.5,711.7 L1138.7,711.9 L1129.9,712.1 L1121.1,712.1 L1112.2,712.1 L1103.4,711.9 L1094.5,711.7 L1085.7,711.4 L1076.8,711.0 L1068.0,710.5 L1059.2,709.9 L1050.4,709.3 L1041.6,708.5 L1032.9,707.7 L1024.2,706.7 L1015.5,705.7 L1007.0,704.6 L998.4,703.4 L990.0,702.1 L981.6,700.8 L973.3,699.3 L965.0,697.8 L956.9,696.2 L948.8,694.5 L940.9,692.8 L933.1,690.9 L925.3,689.0 L917.7,687.0 L910.2,685.0 L902.8,682.8 L895.6,680.6 L888.5,678.4 L881.5,676.0 L874.7,673.6 L868.1,671.2 L861.6,668.6 L855.2,666.1 L849.0,663.4 L843.0,660.7 L837.2,658.0 L831.5,655.1 L826.0,652.3 L820.7,649.4 L815.6,646.4 L810.7,643.4 L805.9,640.4 L801.4,637.3 L797.1,634.1 L792.9,631.0 L789.0,627.8 L785.3,624.6 L781.8,621.3 L778.5,618.0 L775.4,614.7 L772.6,611.4 L769.9,608.0 L767.5,604.6 L765.3,601.2 L763.4,597.8 L761.6,594.4 L760.1,591.0 L758.9,587.5 L757.8,584.1 L757.0,580.7 L756.4,577.2 L756.1,573.8 L755.9,570.3 L756.0,567.0 L756.4,563.8 L757.0,560.5 L757.8,557.2 L758.8,554.0 L760.1,550.8 L761.5,547.6 L763.3,544.4 L765.2,541.2 L767.4,538.1 L769.8,535.0 L772.4,531.9 L775.3,528.9 L778.3,525.9 L781.6,522.9 L785.1,520.0 L788.8,517.1 L792.7,514.3 L796.8,511.5 L801.1,508.7 L805.7,506.0 L810.4,503.4 L815.3,500.8 L820.4,498.3 L825.7,495.8 L831.2,493.4 L836.8,491.0 L842.7,488.7 L848.7,486.5 L854.9,484.3 L861.2,482.2 L867.7,480.1 L874.3,478.2 L881.2,476.3 L888.1,474.4 L895.2,472.7 L902.4,471.0 L909.8,469.4 L917.3,467.8 L924.9,466.4 L932.6,465.0 L940.4,463.7 L948.4,462.5 L956.4,461.4 L964.6,460.3 L972.8,459.3 L981.1,458.4 L989.5,457.6 L997.9,456.9 L1006.5,456.3 L1015.0,455.7 L1023.7,455.3 L1032.4,454.9 L1041.1,454.6 L1049.9,454.4 L1058.7,454.3 L1067.5,454.2 L1076.3,454.3 L1085.2,454.4 L1094.0,454.6" fill="none" stroke="#16f2f4" stroke-width="3" stroke-linecap="round" stroke-linejoin="round"/>
<path d="M754.3,475.5 L747.7,478.6 L741.4,481.9 L735.3,485.2 L729.5,488.5 L723.9,491.9 L718.6,495.4 L713.5,499.0 L708.7,502.6 L704.2,506.2 L699.9,509.9 L695.9,513.7 L692.2,517.5 L688.7,521.3 L685.6,525.2 L682.7,529.1 L680.1,533.1 L677.8,537.0 L675.7,541.1 L674.0,545.1 L672.6,549.2 L671.4,553.3 L670.5,557.4 L670.0,561.5 L669.7,565.6 L669.7,569.9 L670.0,574.2 L670.6,578.5 L671.5,582.9 L672.6,587.2 L674.1,591.5 L675.9,595.9 L677.9,600.2 L680.2,604.5 L682.9,608.7 L685.8,613.0 L688.9,617.2 L692.4,621.5 L696.1,625.6 L700.2,629.8 L704.4,633.9 L709.0,638.0 L713.8,642.0 L718.9,646.0 L724.2,650.0 L729.8,653.9 L735.7,657.8 L741.8,661.6 L748.1,665.3 L754.7,669.0 L761.5,672.6 L768.5,676.2 L775.8,679.7 L783.3,683.1 L791.0,686.5 L798.9,689.8 L807.0,693.0 L815.3,696.1 L823.8,699.2 L832.5,702.1 L841.4,705.0 L850.4,707.8 L859.6,710.6 L869.0,713.2 L878.5,715.7 L888.2,718.2 L898.0,720.5 L907.9,722.8 L918.0,724.9 L928.2,727.0 L938.5,728.9 L949.0,730.8 L959.5,732.5 L970.1,734.2 L980.8,735.7 L991.6,737.1 L1002.4,738.4 L1013.4,739.7 L1024.3,740.8 L1035.3,741.8 L1046.4,742.6 L1057.5,743.4 L1068.6,744.1 L1079.7,744.6 L1090.9,745.0 L1102.0,745.4 L1113.2,745.6 L1124.3,745.7 L1135.4,745.6 L1146.5,745.5 L1157.5,745.3 L1168.5,744.9 L1179.5,744.4 L1190.4,743.8 L1201.2,743.1 L1212.0,742.3 L1222.6,741.4 L1233.2,740.4 L1243.7,739.2 L1254.1,737.9 L1264.4,736.6 L1274.5,735.1 L1284.5,733.5 L1294.4,731.9 L1304.2,730.1 L1313.8,728.2 L1323.3,726.2 L1332.6,724.1 L1341.7,721.9 L1350.7,719.6 L1359.5,717.2 L1368.1,714.7 L1376.5,712.2 L1384.8,709.5 L1392.8,706.8 L1400.6,703.9 L1408.2,701.0 L1415.6,698.0 L1422.8,694.9 L1429.8,691.7 L1436.5,688.5 L1443.0,685.2 L1449.2,681.8 L1455.2,678.3 L1461.0,674.8 L1466.4,671.2 L1471.7,667.6 L1476.7,663.9 L1481.4,660.1 L1485.8,656.3 L1490.0,652.4 L1493.9,648.5 L1497.5,644.5 L1500.9,640.5 L1504.0,636.4 L1506.8,632.3 L1509.3,628.2 L1511.5,624.0 L1513.4,619.8 L1515.1,615.6 L1516.4,611.4 L1517.5,607.1 L1518.3,602.8 L1518.7,598.5 L1518.9,594.2 L1518.8,590.0 L1518.4,585.8 L1517.7,581.7 L1516.7,577.5 L1515.5,573.4 L1513.9,569.2 L1512.1,565.0 L1509.9,560.9 L1507.5,556.8 L1504.8,552.7 L1501.8,548.6 L1498.5,544.5 L1494.9,540.5 L1491.1,536.5 L1487.0,532.5 L1482.6,528.5 L1478.0,524.6 L1473.1,520.7 L1467.9,516.9 L1462.5,513.1 L1456.8,509.4 L1450.9,505.7 L1444.7,502.0 L1438.3,498.4 L1431.6,494.9 L1424.8,491.4 L1417.6,488.0 L1410.3,484.7 L1402.7,481.4 L1395.0,478.2 L1387.0,475.0 L1378.8,472.0 L1370.5,469.0 L1361.9,466.1 L1353.1,463.2 L1344.2,460.5 L1335.1,457.8 L1325.9,455.2 L1316.4,452.7 L1306.9,450.3 L1297.1,447.9 L1287.3,445.7 L1277.3,443.6 L1267.2,441.5 L1256.9,439.6 L1246.6,437.7 L1236.1,435.9 L1225.6,434.3 L1214.9,432.7 L1204.2,431.3 L1193.4,429.9 L1182.5,428.7 L1171.6,427.5 L1160.6,426.5 L1149.5,425.6 L1138.5,424.7 L1127.4,424.0 L1116.2,423.4 L1105.1,422.9 L1094.0,422.5" fill="none" stroke="#16f2f4" stroke-width="3" stroke-linecap="round" stroke-linejoin="round"/>
<path d="M1550.8,509.1 L1556.6,513.8 L1562.2,518.5 L1567.4,523.3 L1572.3,528.1 L1576.9,532.9 L1581.1,537.8 L1585.0,542.7 L1588.6,547.6 L1591.8,552.5 L1594.7,557.5 L1597.2,562.5 L1599.4,567.5 L1601.3,572.5 L1602.8,577.5 L1603.9,582.5 L1604.7,587.5 L1605.1,592.5 L1605.2,597.6 L1604.9,602.8 L1604.3,608.0 L1603.3,613.1 L1602.0,618.3 L1600.3,623.4 L1598.3,628.4 L1596.0,633.5 L1593.2,638.5 L1590.2,643.5 L1586.8,648.4 L1583.0,653.3 L1578.9,658.1 L1574.5,662.9 L1569.8,667.6 L1564.7,672.3 L1559.3,676.9 L1553.6,681.4 L1547.6,685.8 L1541.2,690.2 L1534.6,694.5 L1527.6,698.8 L1520.3,702.9 L1512.8,707.0 L1504.9,711.0 L1496.8,714.9 L1488.4,718.7 L1479.7,722.4 L1470.8,726.0 L1461.6,729.5 L1452.1,732.9 L1442.4,736.2 L1432.5,739.4 L1422.3,742.4 L1411.9,745.4 L1401.3,748.3 L1390.5,751.0 L1379.4,753.6 L1368.2,756.1 L1356.8,758.5 L1345.2,760.8 L1333.4,762.9 L1321.4,764.9 L1309.4,766.8 L1297.1,768.5 L1284.7,770.2 L1272.2,771.7 L1259.6,773.0 L1246.8,774.2 L1233.9,775.3 L1221.0,776.3 L1208.0,777.1 L1194.8,777.8 L1181.6,778.4 L1168.4,778.8 L1155.1,779.1 L1141.7,779.2 L1128.4,779.2 L1115.0,779.1 L1101.5,778.8 L1088.1,778.4 L1074.7,777.9 L1061.3,777.2 L1047.9,776.4 L1034.6,775.4 L1021.3,774.3 L1008.0,773.1 L994.8,771.8 L981.7,770.3 L968.6,768.7 L955.7,766.9 L942.8,765.1 L930.1,763.1 L917.4,760.9 L904.9,758.7 L892.5,756.3 L880.2,753.8 L868.1,751.2 L856.2,748.5 L844.4,745.6 L832.7,742.7 L821.3,739.6 L810.1,736.4 L799.0,733.1 L788.2,729.8 L777.5,726.3 L767.1,722.7 L756.9,719.0 L746.9,715.2 L737.2,711.3 L727.8,707.3 L718.5,703.3 L709.6,699.1 L700.9,694.9 L692.4,690.6 L684.3,686.2 L676.4,681.8 L668.8,677.2 L661.6,672.6 L654.6,668.0 L647.9,663.3 L641.5,658.5 L635.5,653.7 L629.7,648.8 L624.3,643.9 L619.2,638.9 L614.4,633.9 L610.0,628.9 L605.9,623.8 L602.1,618.7 L598.7,613.5 L595.6,608.4 L592.8,603.2 L590.4,598.0 L588.4,592.8 L586.7,587.6 L585.3,582.4 L584.3,577.2 L583.7,572.0 L583.4,566.8 L583.4,561.7 L583.8,556.7 L584.6,551.7 L585.7,546.8 L587.2,541.9 L589.0,537.0 L591.1,532.1 L593.6,527.3 L596.5,522.5 L599.7,517.7 L603.2,513.0 L607.1,508.4 L611.3,503.8 L615.8,499.2 L620.7,494.7 L625.9,490.2 L631.4,485.9 L637.3,481.5 L643.5,477.3 L649.9,473.1 L656.7,469.0 L663.8,465.0 L671.2,461.0 L678.8,457.2 L686.8,453.4 L695.0,449.7" fill="none" stroke="#16f2f4" stroke-width="3" stroke-linecap="round" stroke-linejoin="round"/>
<path d="M796.9,416.8 L809.7,413.9 L822.7,411.2 L835.9,408.6 L849.4,406.2 L863.2,403.9" fill="none" stroke="#16f2f4" stroke-width="3" stroke-linecap="round" stroke-linejoin="round"/>
<path d="M1244.2,403.4 L1258.0,405.4 L1271.7,407.7 L1285.3,410.0 L1298.8,412.6 L1312.0,415.2 L1325.1,418.0" fill="none" stroke="#16f2f4" stroke-width="3" stroke-linecap="round" stroke-linejoin="round"/>
<path d="M1682.8,560.8 L1685.3,566.6 L1687.3,572.5 L1689.0,578.3 L1690.2,584.2 L1691.0,590.0 L1691.5,595.8 L1691.5,601.8 L1691.1,607.8 L1690.3,613.9 L1689.0,619.9 L1687.4,625.9 L1685.4,631.8 L1682.9,637.7 L1680.1,643.6 L1676.8,649.5 L1673.2,655.3 L1669.1,661.0 L1664.7,666.7 L1659.8,672.3 L1654.6,677.9 L1649.0,683.4 L1643.0,688.8 L1636.6,694.1 L1629.9,699.4 L1622.8,704.6 L1615.3,709.7 L1607.4,714.7 L1599.3,719.6 L1590.7,724.5 L1581.9,729.2 L1572.6,733.8 L1563.1,738.3 L1553.2,742.7 L1543.1,747.0 L1532.6,751.2 L1521.8,755.3 L1510.7,759.2 L1499.3,763.1 L1487.7,766.8 L1475.8,770.3 L1463.6,773.8 L1451.2,777.1 L1438.5,780.3 L1425.6,783.3 L1412.4,786.2 L1399.1,789.0 L1385.5,791.6 L1371.7,794.0 L1357.8,796.4 L1343.6,798.5 L1329.3,800.6 L1314.9,802.4 L1300.2,804.1 L1285.5,805.7 L1270.6,807.1 L1255.5,808.4 L1240.4,809.5 L1225.2,810.4 L1209.9,811.2 L1194.5,811.8 L1179.0,812.3 L1163.5,812.6 L1147.9,812.7 L1132.3,812.7 L1116.6,812.6 L1101.0,812.2 L1085.3,811.7 L1069.7,811.1 L1054.0,810.3 L1038.4,809.3 L1022.8,808.2 L1007.3,806.9 L991.9,805.5 L976.5,803.9 L961.2,802.1 L945.9,800.2 L930.8,798.2 L915.8,796.0 L900.9,793.7 L886.2,791.2 L871.6,788.5 L857.1,785.8 L842.9,782.8 L828.7,779.8 L814.8,776.6 L801.1,773.3 L787.5,769.8 L774.2,766.2 L761.1,762.5 L748.2,758.6 L735.6,754.7 L723.2,750.6 L711.0,746.4 L699.1,742.1 L687.5,737.6 L676.2,733.1 L665.2,728.4 L654.4,723.7 L644.0,718.9 L633.9,713.9 L624.0,708.9 L614.6,703.8 L605.4,698.6 L596.6,693.3 L588.1,687.9 L580.0,682.5 L572.2,677.0 L564.7,671.4 L557.7,665.8 L551.0,660.1 L544.7,654.3 L538.7,648.6 L533.2,642.7 L528.0,636.8 L523.2,630.9 L518.8,624.9 L514.8,618.9 L511.3,612.9 L508.1,606.9 L505.3,600.8 L502.9,594.8 L500.9,588.7 L499.3,582.6 L498.2,576.5 L497.4,570.4 L497.1,564.4 L497.1,558.4 L497.6,552.6 L498.5,546.8 L499.8,541.1 L501.5,535.3 L503.6,529.6 L506.1,523.9 L509.1,518.3 L512.4,512.7 L516.1,507.2 L520.2,501.7 L524.8,496.2 L529.7,490.8 L535.0,485.5 L540.6,480.3 L546.7,475.1 L553.2,470.0 L560.0,464.9 L567.1,460.0 L574.7,455.1 L582.6,450.3 L590.8,445.6 L599.4,441.0 L608.4,436.5 L617.6,432.1 L627.2,427.7 L637.2,423.5" fill="none" stroke="#16f2f4" stroke-width="3" stroke-linecap="round" stroke-linejoin="round"/>
<path d="M737.8,391.3 L750.9,388.2 L764.2,385.2 L777.8,382.4 L791.6,379.7 L805.6,377.1 L819.9,374.7 L834.3,372.5 L848.9,370.4 L863.7,368.5 L878.7,366.7 L893.8,365.0 L909.1,363.6 L924.5,362.3 L940.0,361.1 L955.7,360.1 L971.4,359.3 L987.3,358.6 L1003.2,358.1 L1019.2,357.7 L1035.2,357.6 L1051.3,357.5 L1067.4,357.7 L1083.5,358.0 L1099.7,358.5 L1115.8,359.1 L1131.9,359.9 L1148.0,360.8 L1164.1,361.9 L1180.1,363.2 L1196.0,364.6" fill="none" stroke="#16f2f4" stroke-width="3" stroke-linecap="round" stroke-linejoin="round"/>
<path d="M881.3,825.8 L898.4,828.4 L915.7,830.8 L933.0,833.1 L950.5,835.2 L968.1,837.1 L985.8,838.8 L1003.6,840.4 L1021.4,841.7 L1039.2,842.9 L1057.2,844.0 L1075.1,844.8 L1093.0,845.4 L1111.0,845.9 L1128.9,846.2 L1146.8,846.3 L1164.7,846.2 L1182.5,846.0 L1200.3,845.5 L1218.0,844.9 L1235.6,844.1 L1253.1,843.1 L1270.5,841.9 L1287.8,840.6" fill="none" stroke="#16f2f4" stroke-width="3" stroke-linecap="round" stroke-linejoin="round"/>
<path d="M738,392 L797,418" fill="none" stroke="#16f2f4" stroke-width="3" stroke-linecap="round" stroke-linejoin="round"/>
<path d="M696,452 L755,477" fill="none" stroke="#16f2f4" stroke-width="3" stroke-linecap="round" stroke-linejoin="round"/>
<path d="M1144,341 L1196,363" fill="none" stroke="#16f2f4" stroke-width="3" stroke-linecap="round" stroke-linejoin="round"/>
</g>
</svg>
<div class="a" style="left:2px;top:2px;font-size:21px;color:#fff;white-space:nowrap;font-weight:bold;letter-spacing:0.5px;transform:scaleX(1.1);transform-origin:left">NX</div>
<div class="a" style="left:42.5px;top:4px;width:1px;height:19px;background:#2c7a9c"></div>
<div class="a" style="left:73px;top:4px;width:1px;height:19px;background:#2c7a9c"></div>
<div class="a" style="left:117px;top:4px;width:1px;height:19px;background:#2c7a9c"></div>
<div class="a" style="left:215.5px;top:4px;width:1px;height:19px;background:#2c7a9c"></div>
<div class="a" style="left:259px;top:4px;width:1px;height:19px;background:#2c7a9c"></div>
<div class="a" style="left:289px;top:4px;width:1px;height:19px;background:#2c7a9c"></div>
<svg class="a" style="left:50px;top:5px" width="18" height="17" viewBox="0 0 18 17"><path d="M1,1 H14 L17,4 V16 H1 Z M4,1 V6 H13 V1 M4,16 V10 H14 V16 M6,12 H12 M6,14 H12" fill="none" stroke="#e8f4f8" stroke-width="1.3"/></svg>
<svg class="a" style="left:79px;top:4px" width="19" height="19" viewBox="0 0 19 19"><path d="M2,6 L7,2 M2,6 L7,10 M2,6 H11 A6,6 0 0 1 11,18" fill="none" stroke="#e8f4f8" stroke-width="1.3"/></svg>
<div class="a" style="left:104px;top:12px;width:0;height:0;border-left:3px solid transparent;border-right:3px solid transparent;border-top:3px solid #e8f4f8"></div>
<svg class="a" style="left:123px;top:4px" width="19" height="19" viewBox="0 0 19 19"><circle cx="4" cy="13" r="2.5" fill="none" stroke="#e8f4f8" stroke-width="1.3"/><circle cx="8" cy="17" r="2.5" fill="none" stroke="#e8f4f8" stroke-width="1.3"/><path d="M6,12 L17,3 M9,15 L15,5 M5,10 L17,10" fill="none" stroke="#e8f4f8" stroke-width="1.3"/></svg>
<svg class="a" style="left:146px;top:4px" width="19" height="19" viewBox="0 0 19 19"><path d="M1,1 H9 V13 H1 Z M5,5 H13 L17,9 V18 H5 Z" fill="none" stroke="#e8f4f8" stroke-width="1.3"/></svg>
<svg class="a" style="left:169px;top:4px" width="19" height="19" viewBox="0 0 19 19"><path d="M3,3 H9 V6 H3 Z M1,5 H13 V18 H1 Z M6,9 H17 V18 H6 Z" fill="none" stroke="#3f8aab" stroke-width="1.2"/></svg>
<svg class="a" style="left:193px;top:4px" width="18" height="19" viewBox="0 0 18 19"><circle cx="9" cy="10" r="6" fill="none" stroke="#3f8aab" stroke-width="1.2"/><path d="M1,10 H17 M9,2 V18" fill="none" stroke="#3f8aab" stroke-width="1.2"/></svg>
<svg class="a" style="left:221px;top:4px" width="19" height="19" viewBox="0 0 19 19"><path d="M1,1 H17 V18 H1 Z M1,4 H17 M12,9 A4,4 0 1 0 13,13 M12,7 V10 H15" fill="none" stroke="#e8f4f8" stroke-width="1.3"/></svg>
<div class="a" style="left:246px;top:12px;width:0;height:0;border-left:3px solid transparent;border-right:3px solid transparent;border-top:3px solid #e8f4f8"></div>
<svg class="a" style="left:265px;top:5px" width="19" height="17" viewBox="0 0 19 17"><path d="M2,9 L9,2 L17,8 L10,15 Z M2,9 L6,14 L10,15 M9,2 L13,6" fill="none" stroke="#e8f4f8" stroke-width="1.3"/><path d="M10,4 L15,8" stroke="#e8f4f8" stroke-width="3"/></svg>
<svg class="a" style="left:295px;top:4px" width="18" height="19" viewBox="0 0 18 19"><path d="M1,1 H11 V9 H1 Z M1,3 H11 M6,8 H17 V18 H6 Z M6,11 H17" fill="none" stroke="#e8f4f8" stroke-width="1.3"/></svg>
<svg class="a" style="left:318px;top:4px" width="18" height="19" viewBox="0 0 18 19"><path d="M1,1 H17 V18 H1 Z M1,4 H17" fill="none" stroke="#e8f4f8" stroke-width="1.3"/></svg>
<div class="a" style="left:338px;top:5px;font-size:13px;color:#f0f6f8;white-space:nowrap;">Window</div>
<div class="a" style="left:387px;top:11px;width:0;height:0;border-left:3px solid transparent;border-right:3px solid transparent;border-top:3px solid #e8f4f8"></div>
<div class="a" style="left:399px;top:8px;width:8px;height:1.5px;background:#e8f4f8"></div>
<div class="a" style="left:399.5px;top:11px;width:0;height:0;border-left:3.5px solid transparent;border-right:3.5px solid transparent;border-top:3.5px solid #e8f4f8"></div>
<div class="a" style="left:1037px;top:5px;font-size:13px;color:#e4eef2;white-space:nowrap;">NX - Manufacturing</div>
<div class="a" style="left:1767px;top:6px;font-size:13.5px;color:#fff;white-space:nowrap;font-weight:bold;letter-spacing:0.2px">SIEMENS</div>
<div class="a" style="left:1855px;top:17px;width:8px;height:2px;background:#fff"></div>
<svg class="a" style="left:1876px;top:6px" width="16" height="14" viewBox="0 0 16 14"><path d="M4,1 H14 V9 M1,4 H11 V13 H1 Z M4,1 V4 M14,9 H11" fill="none" stroke="#fff" stroke-width="1.5"/></svg>
<svg class="a" style="left:1900px;top:5px" width="14" height="14" viewBox="0 0 14 14"><path d="M1,1 L13,13 M13,1 L1,13" stroke="#fff" stroke-width="1.8"/></svg>
<div class="a" style="left:19px;top:33px;font-size:13px;color:#f2f8fa;white-space:nowrap;">File</div>
<div class="a" style="left:80px;top:33px;font-size:13px;color:#f2dc8a;white-space:nowrap;">Home</div>
<div class="a" style="left:147px;top:33px;font-size:13px;color:#f2f8fa;white-space:nowrap;">Geometry</div>
<div class="a" style="left:236px;top:33px;font-size:13px;color:#f2f8fa;white-space:nowrap;">Analysis</div>
<div class="a" style="left:314px;top:33px;font-size:13px;color:#f2f8fa;white-space:nowrap;">View</div>
<div class="a" style="left:373px;top:33px;font-size:13px;color:#f2f8fa;white-space:nowrap;">Selection</div>
<div class="a" style="left:457px;top:33px;font-size:13px;color:#f2f8fa;white-space:nowrap;">Assemblies</div>
<div class="a" style="left:554px;top:33px;font-size:13px;color:#f2f8fa;white-space:nowrap;">Render</div>
<div class="a" style="left:628px;top:33px;font-size:13px;color:#f2f8fa;white-space:nowrap;">Tools</div>
<div class="a" style="left:691px;top:33px;font-size:13px;color:#f2f8fa;white-space:nowrap;">Application</div>
<div class="a" style="left:788px;top:33px;font-size:13px;color:#f2f8fa;white-space:nowrap;">PMI</div>
<div class="a" style="left:842px;top:33px;font-size:13px;color:#f2f8fa;white-space:nowrap;">CAM Preperation</div>
<div class="a" style="left:974px;top:33px;font-size:13px;color:#f2f8fa;white-space:nowrap;">Prg Assistance</div>
<div class="a" style="left:64px;top:51px;width:67px;height:3px;background:#f0c850"></div>
<div class="a" style="left:1620px;top:31px;width:117px;height:18px;background:#fff"></div>
<div class="a" style="left:1623px;top:33px;font-size:11.5px;color:#a8a8a8;white-space:nowrap;">Find a Command</div>
<svg class="a" style="left:1716px;top:31px" width="20" height="18" viewBox="0 0 20 18"><circle cx="12" cy="7" r="5" fill="none" stroke="#444" stroke-width="1.3"/><path d="M8.5,10.5 L3,16" stroke="#444" stroke-width="1.6"/></svg>
<svg class="a" style="left:1747px;top:31px" width="18" height="18" viewBox="0 0 18 18"><path d="M1,5 V1 H5 M13,1 H17 V5 M17,13 V17 H13 M5,17 H1 V13" fill="none" stroke="#fff" stroke-width="1.4"/></svg>
<svg class="a" style="left:1772px;top:32px" width="19" height="14" viewBox="0 0 19 14"><path d="M1,12 L9.5,3 L18,12" fill="none" stroke="#fff" stroke-width="1.5"/></svg>
<svg class="a" style="left:1798px;top:31px" width="18" height="18" viewBox="0 0 18 18"><circle cx="9" cy="9" r="7.5" fill="none" stroke="#fff" stroke-width="1.3"/><path d="M6.5,7 A2.5,2.5 0 1 1 9,9.5 V11.5 M9,13 V14.5" fill="none" stroke="#fff" stroke-width="1.3"/></svg>
<svg class="a" style="left:1826px;top:33px" width="16" height="14" viewBox="0 0 16 14"><path d="M1,5 L8,2 L15,5 L8,8 Z" fill="#1a2a5a"/><path d="M4,7 V11 Q8,13 12,11 V7" fill="#2a4aa0"/><path d="M13,6 V11" stroke="#fff" stroke-width="1"/></svg>
<div class="a" style="left:1845px;top:33px;font-size:12px;color:#fff;white-space:nowrap;">Tutorials</div>
<div class="a" style="left:1901px;top:34px;width:12px;height:12px;border-radius:6px;background:#8a6a6a;opacity:0.7"></div>
<svg class="a" style="left:12px;top:59px" width="34" height="34" viewBox="0 0 34 34"><rect x="1" y="13" width="7" height="19" fill="#ee8a2a"/><path d="M1,20 L8,16" stroke="#f7d0a8" stroke-width="1.5"/><path d="M1,26 L8,22" stroke="#f7d0a8" stroke-width="1.5"/><path d="M1,32 L8,28" stroke="#f7d0a8" stroke-width="1.5"/><rect x="1" y="13" width="7" height="19" fill="none" stroke="#b05a10" stroke-width="0.8"/><rect x="12" y="3" width="7" height="22" fill="#bdbdbd" stroke="#888" stroke-width="0.8"/><circle cx="14" cy="18" r="4" fill="#ee8a2a"/><circle cx="23" cy="22" r="7" fill="#fff" stroke="#222" stroke-width="1.3"/><path d="M18.5,22 H27.5 M23,17.5 V26.5" stroke="#222" stroke-width="1.3"/></svg>
<svg class="a" style="left:62px;top:59px" width="34" height="34" viewBox="0 0 34 34"><path d="M12,2 L18,2 L26,22 L20,22 Z" fill="#a0a0a0" stroke="#777" stroke-width="0.8"/><rect x="2" y="12" width="14" height="11" rx="4" fill="#ee8a2a"/><circle cx="24" cy="24" r="7" fill="#fff" stroke="#222" stroke-width="1.3"/><path d="M19.5,24 H28.5 M24,19.5 V28.5" stroke="#222" stroke-width="1.3"/></svg>
<svg class="a" style="left:122px;top:59px" width="34" height="34" viewBox="0 0 34 34"><rect x="2" y="2" width="7" height="22" fill="#ee8a2a"/><path d="M2,9 L9,5" stroke="#f7d0a8" stroke-width="1.5"/><path d="M2,15 L9,11" stroke="#f7d0a8" stroke-width="1.5"/><path d="M2,21 L9,17" stroke="#f7d0a8" stroke-width="1.5"/><rect x="2" y="2" width="7" height="22" fill="none" stroke="#b05a10" stroke-width="0.8"/><path d="M12,9 H26 M11,13 H23 M12,16 L25,12" stroke="#555" stroke-width="1"/><circle cx="23" cy="24" r="7" fill="#fff" stroke="#222" stroke-width="1.3"/><path d="M18.5,24 H27.5 M23,19.5 V28.5" stroke="#222" stroke-width="1.3"/></svg>
<svg class="a" style="left:174px;top:61px" width="24" height="24" viewBox="0 0 24 24"><rect x="1" y="1" width="10" height="9" fill="#ddd" stroke="#666" stroke-width="0.9"/><rect x="6" y="5" width="13" height="9" fill="#eee" stroke="#666" stroke-width="0.9"/><circle cx="17" cy="14" r="5.5" fill="#fff" stroke="#222" stroke-width="1.3"/><path d="M14.0,14 H20.0 M17,11.0 V17.0" stroke="#222" stroke-width="1.3"/></svg>
<svg class="a" style="left:174px;top:92px" width="24" height="24" viewBox="0 0 24 24"><path d="M1,3 L5,1 L9,3 L13,1 L17,3 V8 H1 Z" fill="#eee" stroke="#666" stroke-width="0.9"/><path d="M1,10 H17 M1,13 H12" stroke="#777" stroke-width="1.2"/><circle cx="17" cy="16" r="5.5" fill="#fff" stroke="#222" stroke-width="1.3"/><path d="M14.0,16 H20.0 M17,13.0 V19.0" stroke="#222" stroke-width="1.3"/></svg>
<div class="a" style="left:29px;top:99px;width:200px;margin-left:-100px;text-align:center;font-size:11.3px;line-height:13px;color:#333;white-space:nowrap;">Create<br>Tool</div>
<div class="a" style="left:79.5px;top:99px;width:200px;margin-left:-100px;text-align:center;font-size:11.3px;line-height:13px;color:#333;white-space:nowrap;">Create<br>Geometry</div>
<div class="a" style="left:139px;top:99px;width:200px;margin-left:-100px;text-align:center;font-size:11.3px;line-height:13px;color:#333;white-space:nowrap;">Create<br>Operation</div>
<div class="a" style="left:195px;top:131px;width:0;height:0;border-left:3px solid transparent;border-right:3px solid transparent;border-top:3px solid #222"></div>
<div class="a" style="left:209px;top:59px;width:1px;height:80px;background:#e6e6e6"></div>
<svg class="a" style="left:230px;top:59px" width="34" height="34" viewBox="0 0 34 34"><rect x="2" y="2" width="7" height="24" fill="#ee8a2a"/><path d="M2,9 L9,5" stroke="#f7d0a8" stroke-width="1.5"/><path d="M2,15 L9,11" stroke="#f7d0a8" stroke-width="1.5"/><path d="M2,21 L9,17" stroke="#f7d0a8" stroke-width="1.5"/><path d="M2,27 L9,23" stroke="#f7d0a8" stroke-width="1.5"/><rect x="2" y="2" width="7" height="24" fill="none" stroke="#b05a10" stroke-width="0.8"/><rect x="13" y="11" width="15" height="19" fill="#fff" stroke="#333" stroke-width="1.2"/><path d="M16,15 H18 V17 H16 Z M20,16 H26 M16,20 L17,21.5 L19,19 M20,20.5 H26 M16,24 H18 V26 H16 Z M20,25 H26" fill="none" stroke="#333" stroke-width="0.9"/></svg>
<div class="a" style="left:247.5px;top:99px;width:200px;margin-left:-100px;text-align:center;font-size:11.3px;line-height:13px;color:#333;white-space:nowrap;">Properties</div>
<div class="a" style="left:245px;top:114px;width:0;height:0;border-left:3px solid transparent;border-right:3px solid transparent;border-top:3px solid #222"></div>
<div class="a" style="left:270px;top:131px;width:0;height:0;border-left:3px solid transparent;border-right:3px solid transparent;border-top:3px solid #222"></div>
<div class="a" style="left:284px;top:59px;width:1px;height:80px;background:#e6e6e6"></div>
<svg class="a" style="left:302px;top:60px" width="34" height="34" viewBox="0 0 34 34"><path d="M1,1 H11 V9.666666666666666 H1 V18.333333333333332 H11 V27 H1" fill="none" stroke="#5a5a5a" stroke-width="1.3"/><path d="M18,17 A6,6 0 0 1 29,16 M30,13 V17 H26 M29,22 A6,6 0 0 1 18,23 M17,26 V22 H21" fill="none" stroke="#555" stroke-width="1.3"/></svg>
<svg class="a" style="left:352px;top:60px" width="34" height="34" viewBox="0 0 34 34"><rect x="10" y="1" width="6" height="12" fill="#888"/><path d="M2,12 L8,8 H24 V22 L18,28 H2 Z" fill="#c8c8c8" stroke="#777" stroke-width="0.8"/><path d="M4,13 H14 V24 H4 Z" fill="#e02030"/><circle cx="24" cy="23" r="7" fill="#fff" stroke="#222" stroke-width="1.3"/><path d="M20.5,23 L23,26 L27.5,20" fill="none" stroke="#222" stroke-width="1.3"/></svg>
<svg class="a" style="left:401px;top:60px" width="34" height="34" viewBox="0 0 34 34"><path d="M2,10 L10,4 H26 V20 L20,26 H2 Z" fill="#c8c8c8" stroke="#777" stroke-width="0.8"/><path d="M6,12 H20 V22 H6 Z" fill="#eee"/><rect x="12" y="1" width="5" height="14" fill="#ee8a2a"/><path d="M12,8 L17,4" stroke="#f7d0a8" stroke-width="1.5"/><path d="M12,14 L17,10" stroke="#f7d0a8" stroke-width="1.5"/><rect x="12" y="1" width="5" height="14" fill="none" stroke="#b05a10" stroke-width="0.8"/><circle cx="24" cy="23" r="7" fill="#fff" stroke="#222" stroke-width="1.3"/><path d="M20.5,23 L23,26 L27.5,20" fill="none" stroke="#222" stroke-width="1.3"/></svg>
<svg class="a" style="left:457px;top:60px" width="34" height="34" viewBox="0 0 34 34"><path d="M2,4 L8,1 H30 V26 H24 V20 H14 V26 H2 Z" fill="#c8c8c8" stroke="#777" stroke-width="0.8"/><path d="M5,7 H11 V15 H5 Z" fill="#eee" stroke="#888" stroke-width="0.6"/><path d="M22,2 H25 V8 L23,10 L21,8 Z" fill="#ee8a2a"/><path d="M16,13 L20,10 L22,14 Z" fill="#ee8a2a"/><circle cx="24" cy="23" r="7" fill="#fff" stroke="#222" stroke-width="1.3"/><path d="M20.5,23 L23,26 L27.5,20" fill="none" stroke="#222" stroke-width="1.3"/></svg>
<svg class="a" style="left:506px;top:60px" width="34" height="34" viewBox="0 0 34 34"><path d="M1,1 H10 V9.666666666666666 H1 V18.333333333333332 H10 V27 H1" fill="none" stroke="#5a5a5a" stroke-width="1.3"/><path d="M17,15 H28 M17,14 V30 H27 V25 M21,22 H31 M28,19 L31,22 L28,25" fill="none" stroke="#555" stroke-width="1.2"/></svg>
<svg class="a" style="left:574px;top:60px" width="34" height="34" viewBox="0 0 34 34"><path d="M10,1 H26 V27 H10 Z" fill="#fff" stroke="#555" stroke-width="1"/><path d="M7,3 H23 V29 H7 Z" fill="#fff" stroke="#555" stroke-width="1"/><path d="M4,5 H16 L20,9 V31 H4 Z" fill="#fff" stroke="#333" stroke-width="1.1"/><path d="M7,11 H11 V14 H7 V17 H11 M13,14 H17 M7,20 H17 M7,23 H17 M7,26 H17" fill="none" stroke="#333" stroke-width="1"/></svg>
<svg class="a" style="left:648px;top:60px" width="32" height="32" viewBox="0 0 32 32"><rect x="4" y="3" width="7" height="24" rx="3" fill="#3a5ad0"/><path d="M4,7 L11,11 M4,13 L11,17 M4,19 L11,23" stroke="#9ab0f0" stroke-width="1.3"/><path d="M12,9 L28,6 L18,11 L28,10 M12,16 L27,13 L17,19" fill="none" stroke="#222" stroke-width="1.4"/></svg>
<div class="a" style="left:320.5px;top:99px;width:200px;margin-left:-100px;text-align:center;font-size:11.3px;line-height:13px;color:#333;white-space:nowrap;">Generate<br>Tool Path</div>
<div class="a" style="left:369px;top:99px;width:200px;margin-left:-100px;text-align:center;font-size:11.3px;line-height:13px;color:#333;white-space:nowrap;">Gouge<br>Check</div>
<div class="a" style="left:418px;top:99px;width:200px;margin-left:-100px;text-align:center;font-size:11.3px;line-height:13px;color:#333;white-space:nowrap;">Verify<br>Tool Path</div>
<div class="a" style="left:474.5px;top:99px;width:200px;margin-left:-100px;text-align:center;font-size:11.3px;line-height:13px;color:#333;white-space:nowrap;">Simulate<br>Machine</div>
<div class="a" style="left:523.5px;top:99px;width:200px;margin-left:-100px;text-align:center;font-size:11.3px;line-height:13px;color:#333;white-space:nowrap;">Post<br>Process</div>
<div class="a" style="left:590.5px;top:99px;width:200px;margin-left:-100px;text-align:center;font-size:11.3px;line-height:13px;color:#333;white-space:nowrap;">Shop<br>Documentation</div>
<div class="a" style="left:663px;top:97px;width:200px;margin-left:-100px;text-align:center;font-size:11.3px;line-height:13px;color:#333;white-space:nowrap;">More</div>
<div class="a" style="left:660px;top:113px;width:0;height:0;border-left:3px solid transparent;border-right:3px solid transparent;border-top:3px solid #222"></div>
<div class="a" style="left:672px;top:131px;width:0;height:0;border-left:3px solid transparent;border-right:3px solid transparent;border-top:3px solid #222"></div>
<div class="a" style="left:686px;top:59px;width:1px;height:80px;background:#e6e6e6"></div>
<div class="a" style="left:696px;top:58px;width:54px;height:67px;background:#cfe4ec"></div>
<div class="a" style="left:750px;top:58px;width:55px;height:67px;background:#cfe4ec"></div>
<div class="a" style="left:864px;top:58px;width:32px;height:32px;background:#cfe4ec"></div>
<svg class="a" style="left:704px;top:60px" width="34" height="34" viewBox="0 0 34 34"><path d="M1,1 H10 V10.0 H1 V19.0 H10 V28 H1" fill="none" stroke="#5a5a5a" stroke-width="1.3"/><path d="M10.0,22 Q19,14.0 28.0,22 Q19,30.0 10.0,22 Z" fill="#fff" stroke="#333" stroke-width="1.3"/><circle cx="19" cy="22" r="3.0" fill="#333"/></svg>
<svg class="a" style="left:762px;top:60px" width="34" height="34" viewBox="0 0 34 34"><path d="M1,1 H10 V10.0 H1 V19.0 H10 V28 H1" fill="none" stroke="#5a5a5a" stroke-width="1.3"/><circle cx="22" cy="8" r="5" fill="none" stroke="#d02040" stroke-width="1.4"/><path d="M15,8 H29 M22,1 V15" stroke="#222" stroke-width="1.2"/></svg>
<svg class="a" style="left:815px;top:60px" width="34" height="34" viewBox="0 0 34 34"><path d="M1,1 H13 L20,8 V27 H1 Z" fill="#fff" stroke="#555" stroke-width="1"/><path d="M4,4 H12 V10.666666666666668 H4 V17.333333333333336 H12 V24 H4" fill="none" stroke="#555" stroke-width="1"/><path d="M15,16 H27 V29 H15 Z M19,22 H30 M27,19 L30,22 L27,25" fill="#fff" stroke="#555" stroke-width="1.1"/></svg>
<svg class="a" style="left:866px;top:60px" width="30" height="30" viewBox="0 0 30 30"><path d="M2,3 H24 M3,1 V5 M23,1 V5" stroke="#e08a30" stroke-width="1"/><rect x="2" y="8" width="22" height="11" fill="#fff" stroke="#444" stroke-width="1.1"/><path d="M4,19 L12,8 M10,19 L18,8 M16,19 L24,9" stroke="#444" stroke-width="1.5"/><path d="M11.8,21 Q19,14.6 26.2,21 Q19,27.4 11.8,21 Z" fill="#fff" stroke="#333" stroke-width="1.3"/><circle cx="19" cy="21" r="2.4000000000000004" fill="#333"/></svg>
<svg class="a" style="left:871px;top:92px" width="18" height="30" viewBox="0 0 18 30"><rect x="1" y="1" width="15" height="5" rx="1" fill="#888"/><rect x="4" y="6" width="9" height="21" fill="#e07a20"/><path d="M4,10 L13,13 M4,16 L13,19 M4,22 L13,25" stroke="#f7c89a" stroke-width="1.3"/></svg>
<div class="a" style="left:900px;top:105px;width:0;height:0;border-left:3px solid transparent;border-right:3px solid transparent;border-top:3px solid #222"></div>
<svg class="a" style="left:925px;top:59px" width="18" height="18" viewBox="0 0 18 18"><path d="M9,1 L17,9 H12 V16 H6 V9 H1 Z" fill="#e2e2e2"/></svg>
<svg class="a" style="left:925px;top:81px" width="18" height="18" viewBox="0 0 18 18"><path d="M1,6 L9,2 L17,6 L9,10 Z" fill="#f0f0f0" stroke="#666" stroke-width="0.8"/><path d="M1,9 L9,5 L17,9 L9,13 Z" fill="#d0e0b0" stroke="#666" stroke-width="0.8"/><path d="M1,12 L9,8 L17,12 L9,16 Z" fill="#a0b0e0" stroke="#666" stroke-width="0.8"/></svg>
<svg class="a" style="left:925px;top:102px" width="18" height="18" viewBox="0 0 18 18"><path d="M9,17 L17,9 H12 V2 H6 V9 H1 Z" fill="#e2e2e2"/></svg>
<svg class="a" style="left:958px;top:60px" width="34" height="32" viewBox="0 0 34 32"><path d="M1,1 H32" stroke="#30a030" stroke-width="1.2"/><path d="M2,16 Q8,2 30,8 M6,20 Q10,6 28,4" fill="none" stroke="#e02020" stroke-width="1.2"/><path d="M4,18 Q2,10 14,6" fill="none" stroke="#f0c020" stroke-width="1.2"/><circle cx="25" cy="21" r="8" fill="#30c030"/><path d="M25,21 V13 A8,8 0 0 1 32,24 Z" fill="#e02020"/><path d="M25,21 L32,24 A8,8 0 0 1 17,22 Z" fill="#30c030"/><path d="M25,21 L17,22 A8,8 0 0 1 25,13 Z" fill="#3a8ab0"/></svg>
<div class="a" style="left:723px;top:99px;width:200px;margin-left:-100px;text-align:center;font-size:11.3px;line-height:13px;color:#333;white-space:nowrap;">Display<br>Tool Path</div>
<div class="a" style="left:777.5px;top:99px;width:200px;margin-left:-100px;text-align:center;font-size:11.3px;line-height:13px;color:#333;white-space:nowrap;">Select<br>Tool Path</div>
<div class="a" style="left:832.5px;top:99px;width:200px;margin-left:-100px;text-align:center;font-size:11.3px;line-height:13px;color:#333;white-space:nowrap;">Tool Path<br>Report</div>
<div class="a" style="left:975px;top:97px;width:200px;margin-left:-100px;text-align:center;font-size:11.3px;line-height:13px;color:#333;white-space:nowrap;">More</div>
<div class="a" style="left:972px;top:113px;width:0;height:0;border-left:3px solid transparent;border-right:3px solid transparent;border-top:3px solid #222"></div>
<div class="a" style="left:985px;top:131px;width:0;height:0;border-left:3px solid transparent;border-right:3px solid transparent;border-top:3px solid #222"></div>
<div class="a" style="left:998px;top:59px;width:1px;height:80px;background:#e6e6e6"></div>
<svg class="a" style="left:1010px;top:61px" width="26" height="26" viewBox="0 0 26 26"><circle cx="13" cy="13" r="12" fill="none" stroke="#555" stroke-width="1.2"/><path d="M17,8 V18 L8,13 Z" fill="none" stroke="#444" stroke-width="1.3"/></svg>
<svg class="a" style="left:1058px;top:61px" width="26" height="26" viewBox="0 0 26 26"><circle cx="13" cy="13" r="12" fill="none" stroke="#555" stroke-width="1.2"/><path d="M9,8 H12 V18 H9 Z M14,8 H17 V18 H14 Z" fill="none" stroke="#444" stroke-width="1.2"/></svg>
<svg class="a" style="left:1010px;top:94px" width="26" height="26" viewBox="0 0 26 26"><circle cx="13" cy="13" r="12" fill="none" stroke="#555" stroke-width="1.2"/><path d="M9,8 V18 M18,8 V18 L10,13 Z" fill="none" stroke="#444" stroke-width="1.3"/></svg>
<svg class="a" style="left:1058px;top:94px" width="26" height="26" viewBox="0 0 26 26"><circle cx="13" cy="13" r="12" fill="none" stroke="#555" stroke-width="1.2"/><path d="M17,8 V18 M8,8 V18 L16,13 Z" fill="none" stroke="#444" stroke-width="1.3"/></svg>
<svg class="a" style="left:1106px;top:60px" width="34" height="34" viewBox="0 0 34 34"><circle cx="17" cy="17" r="16" fill="none" stroke="#555" stroke-width="1.2"/><path d="M13,10 L24,17 L13,24 Z" fill="none" stroke="#444" stroke-width="1.3"/></svg>
<div class="a" style="left:1044px;top:106px;width:0;height:0;border-left:3px solid transparent;border-right:3px solid transparent;border-top:3px solid #222"></div>
<div class="a" style="left:1092px;top:106px;width:0;height:0;border-left:3px solid transparent;border-right:3px solid transparent;border-top:3px solid #222"></div>
<div class="a" style="left:1149px;top:75px;width:96px;height:4px;background:#b8b8b8"></div>
<div class="a" style="left:1188px;top:69px;width:8px;height:16px;background:#1a6a90"></div>
<div class="a" style="left:1194px;top:91px;width:200px;margin-left:-100px;text-align:center;font-size:11.3px;line-height:13px;color:#333;white-space:nowrap;">Speed</div>
<div class="a" style="left:1123px;top:99px;width:200px;margin-left:-100px;text-align:center;font-size:11.3px;line-height:13px;color:#333;white-space:nowrap;">Play</div>
<div class="a" style="left:1241px;top:131px;width:0;height:0;border-left:3px solid transparent;border-right:3px solid transparent;border-top:3px solid #222"></div>
<div class="a" style="left:1255px;top:59px;width:1px;height:80px;background:#e6e6e6"></div>
<svg class="a" style="left:1269px;top:60px" width="34" height="34" viewBox="0 0 34 34"><path d="M1,8 L6,5 V12 Z" fill="#ddd"/><path d="M6,5 L10,2 H14 V8 H18 V14 H22 V20 L18,24 H6 Z" fill="#ee8a2a" stroke="#b05a10" stroke-width="0.6"/><path d="M1,8 L6,12 V24 L1,20 Z" fill="#ccc" stroke="#888" stroke-width="0.6"/><path d="M15.9,23 Q24,15.8 32.1,23 Q24,30.2 15.9,23 Z" fill="#fff" stroke="#333" stroke-width="1.3"/><circle cx="24" cy="23" r="2.7" fill="#333"/></svg>
<svg class="a" style="left:1315px;top:58px" width="34" height="34" viewBox="0 0 34 34"><path d="M2,14 H14 V2 H20 V20 H2 Z" fill="#ddd" stroke="#555" stroke-width="1"/><path d="M10,4 H17 M13,2 L17,4 L13,6 M24,4 H19 M22,2 L19,4 L22,6" fill="none" stroke="#333" stroke-width="0.9"/><path d="M22,10 L27,14 L21,22 L17,19 Z M15,28 H29 M19,28 Q18,22 22,20" fill="#fff" stroke="#333" stroke-width="1.1"/></svg>
<div class="a" style="left:1286px;top:99px;width:200px;margin-left:-100px;text-align:center;font-size:11.3px;line-height:13px;color:#333;white-space:nowrap;">Display<br>IPW</div>
<div class="a" style="left:1331px;top:99px;width:200px;margin-left:-100px;text-align:center;font-size:11.3px;line-height:13px;color:#333;white-space:nowrap;">Analyze<br>IPW &#9662;</div>
<div class="a" style="left:1349px;top:131px;width:0;height:0;border-left:3px solid transparent;border-right:3px solid transparent;border-top:3px solid #222"></div>
<div class="a" style="left:1363px;top:59px;width:1px;height:80px;background:#e6e6e6"></div>
<svg class="a" style="left:1381px;top:60px" width="34" height="34" viewBox="0 0 34 34"><path d="M2,6 L9,2 L20,6 V22 L13,27 L2,22 Z" fill="#c0c0c0" stroke="#666" stroke-width="0.8"/><path d="M5,9 Q9,5 13,9 V22 H5 Z" fill="#8ab" stroke="#2ac0e0" stroke-width="1.3"/><circle cx="24" cy="20" r="6" fill="#fff" stroke="#333" stroke-width="1.2"/><path d="M19,25 L14,30" stroke="#555" stroke-width="2"/></svg>
<svg class="a" style="left:1448px;top:60px" width="34" height="34" viewBox="0 0 34 34"><path d="M1,18 L10,13 L20,17 V21 L11,26 L1,22 Z" fill="#ccc" stroke="#666" stroke-width="0.8"/><rect x="6" y="4" width="9" height="12" rx="4" fill="#ee8a2a"/><path d="M23,1 H29 V6.333333333333333 H23 V11.666666666666666 H29 V17 H23" fill="none" stroke="#555" stroke-width="1.1"/><circle cx="23" cy="23" r="7" fill="#fff" stroke="#222" stroke-width="1.3"/><path d="M18.5,23 H27.5 M23,18.5 V27.5" stroke="#222" stroke-width="1.3"/></svg>
<svg class="a" style="left:1516px;top:60px" width="34" height="34" viewBox="0 0 34 34"><path d="M2,6 L8,2 H28 V24 L22,28 H2 Z" fill="#d0d0d0" stroke="#666" stroke-width="0.8"/><path d="M2,6 H22 V28" fill="none" stroke="#888" stroke-width="0.8"/><path d="M7,10 Q12,6 17,10 V16 H15 V26 H9 V16 H7 Z" fill="#eee" stroke="#e020e0" stroke-width="1.6"/></svg>
<div class="a" style="left:1397.5px;top:99px;width:200px;margin-left:-100px;text-align:center;font-size:11.3px;line-height:13px;color:#333;white-space:nowrap;">Find<br>Features</div>
<div class="a" style="left:1465px;top:99px;width:200px;margin-left:-100px;text-align:center;font-size:11.3px;line-height:13px;color:#333;white-space:nowrap;">Create Feature<br>Process</div>
<div class="a" style="left:1533px;top:97px;width:200px;margin-left:-100px;text-align:center;font-size:11.3px;line-height:13px;color:#333;white-space:nowrap;">More</div>
<div class="a" style="left:1530px;top:113px;width:0;height:0;border-left:3px solid transparent;border-right:3px solid transparent;border-top:3px solid #222"></div>
<div class="a" style="left:1543px;top:131px;width:0;height:0;border-left:3px solid transparent;border-right:3px solid transparent;border-top:3px solid #222"></div>
<div class="a" style="left:1557px;top:59px;width:1px;height:80px;background:#e6e6e6"></div>
<svg class="a" style="left:1591px;top:60px" width="34" height="34" viewBox="0 0 34 34"><path d="M1,1 H10 V9.666666666666666 H1 V18.333333333333332 H10 V27 H1" fill="none" stroke="#5a5a5a" stroke-width="1.3"/><rect x="16" y="1" width="12" height="13" fill="#fff" stroke="#444" stroke-width="1"/><path d="M18,4 H20 V6 H18 Z M22,5 H26 M18,9 L19,10 L21,8 M22,9 H26" fill="none" stroke="#444" stroke-width="0.8"/><path d="M16,17 H27 M16,16 V30 H26 V26 M20,23 H30 M27,20 L30,23 L27,26" fill="none" stroke="#444" stroke-width="1.1"/></svg>
<div class="a" style="left:1608px;top:99px;width:200px;margin-left:-100px;text-align:center;font-size:11.3px;line-height:13px;color:#333;white-space:nowrap;">Post<br>Configurator &#9662;</div>
<div class="a" style="left:1642px;top:131px;width:0;height:0;border-left:3px solid transparent;border-right:3px solid transparent;border-top:3px solid #222"></div>
<div class="a" style="left:1655px;top:59px;width:1px;height:80px;background:#e6e6e6"></div>
<div class="a" style="left:1909px;top:131px;width:0;height:0;border-left:3px solid transparent;border-right:3px solid transparent;border-top:3px solid #222"></div>
<div class="a" style="left:97px;top:129px;width:200px;margin-left:-100px;text-align:center;font-size:11.5px;line-height:13px;color:#2e84b0;white-space:nowrap;">Insert</div>
<div class="a" style="left:240px;top:129px;width:200px;margin-left:-100px;text-align:center;font-size:11.5px;line-height:13px;color:#2e84b0;white-space:nowrap;">Actions</div>
<div class="a" style="left:478px;top:129px;width:200px;margin-left:-100px;text-align:center;font-size:11.5px;line-height:13px;color:#2e84b0;white-space:nowrap;">Operations</div>
<div class="a" style="left:836px;top:129px;width:200px;margin-left:-100px;text-align:center;font-size:11.5px;line-height:13px;color:#2e84b0;white-space:nowrap;">Display</div>
<div class="a" style="left:1120px;top:129px;width:200px;margin-left:-100px;text-align:center;font-size:11.5px;line-height:13px;color:#2e84b0;white-space:nowrap;">Tool Path Animation</div>
<div class="a" style="left:1301px;top:129px;width:200px;margin-left:-100px;text-align:center;font-size:11.5px;line-height:13px;color:#2e84b0;white-space:nowrap;">IPW</div>
<div class="a" style="left:1454px;top:129px;width:200px;margin-left:-100px;text-align:center;font-size:11.5px;line-height:13px;color:#2e84b0;white-space:nowrap;">Feature</div>
<div class="a" style="left:1600px;top:129px;width:200px;margin-left:-100px;text-align:center;font-size:11.5px;line-height:13px;color:#2e84b0;white-space:nowrap;">Tools</div>
<svg class="a" style="left:12px;top:151px" width="12" height="11" viewBox="0 0 12 11"><path d="M0,1 H11 M0,5.5 H11 M0,10 H11" stroke="#333" stroke-width="1.1"/></svg>
<div class="a" style="left:30px;top:150px;font-size:12px;color:#222;white-space:nowrap;"><u>M</u>enu</div>
<div class="a" style="left:64px;top:156px;width:0;height:0;border-left:3px solid transparent;border-right:3px solid transparent;border-top:3px solid #222"></div>
<div class="a" style="left:78px;top:147px;width:1px;height:20px;background:#e0e0e0"></div>
<div class="a" style="left:88px;top:147px;width:23px;height:21px;background:#d4e6f0"></div>
<div class="a" style="left:201px;top:147px;width:23px;height:21px;background:#d4e6f0"></div>
<svg class="a" style="left:90px;top:148px" width="20" height="20" viewBox="0 0 20 20"><rect x="2" y="2" width="6" height="7" fill="#dde" stroke="#1a2a90" stroke-width="1"/><rect x="6" y="6" width="6" height="7" fill="#dde" stroke="#1a2a90" stroke-width="1"/><path d="M11,8 V16 H15 M11,12 H15" fill="none" stroke="#1a1aa0" stroke-width="1.2"/><rect x="15" y="10.5" width="3" height="3" fill="none" stroke="#1a1aa0" stroke-width="1"/><rect x="15" y="14.5" width="3" height="3" fill="none" stroke="#1a1aa0" stroke-width="1"/></svg>
<svg class="a" style="left:114px;top:148px" width="20" height="20" viewBox="0 0 20 20"><path d="M3,14 L8,4 L12,6 L6,16 Z" fill="#7a8ad0"/><rect x="9" y="2" width="3" height="6" fill="#ee8a2a"/><path d="M12,7 V15 H16 M12,11 H16" fill="none" stroke="#1a1aa0" stroke-width="1.2"/><rect x="16" y="9.5" width="3" height="3" fill="none" stroke="#1a1aa0" stroke-width="1"/><rect x="16" y="13.5" width="3" height="3" fill="none" stroke="#1a1aa0" stroke-width="1"/></svg>
<svg class="a" style="left:139px;top:148px" width="20" height="20" viewBox="0 0 20 20"><circle cx="6" cy="6" r="4.5" fill="#c04060"/><path d="M2,6 A4.5,4.5 0 0 1 10,4" fill="#5060c0"/><path d="M10,9 V17 H14 M10,13 H14" fill="none" stroke="#1a1aa0" stroke-width="1.2"/><rect x="14" y="11.5" width="3" height="3" fill="none" stroke="#1a1aa0" stroke-width="1"/><rect x="14" y="15.5" width="3" height="3" fill="none" stroke="#1a1aa0" stroke-width="1"/></svg>
<svg class="a" style="left:162px;top:148px" width="20" height="20" viewBox="0 0 20 20"><path d="M1,3 L4,1 L7,3 L10,1 L13,3 V7 H1 Z" fill="#c8d0f0" stroke="#1a2a90" stroke-width="0.9"/><path d="M1,9 H13" stroke="#1a2a90" stroke-width="1"/><path d="M11,9 V17 H15 M11,13 H15" fill="none" stroke="#1a1aa0" stroke-width="1.2"/><rect x="15" y="11.5" width="3" height="3" fill="none" stroke="#1a1aa0" stroke-width="1"/><rect x="15" y="15.5" width="3" height="3" fill="none" stroke="#1a1aa0" stroke-width="1"/></svg>
<div class="a" style="left:192px;top:147px;width:1px;height:20px;background:#e0e0e0"></div>
<svg class="a" style="left:203px;top:148px" width="20" height="20" viewBox="0 0 20 20"><path d="M1,8 V2 H4 V5 H7 V2 H10 V5 M12,8 V2 H15 V6" fill="none" stroke="#d02020" stroke-width="1.1"/><path d="M11,10 V18 H15 M11,14 H15" fill="none" stroke="#1a1aa0" stroke-width="1.2"/><rect x="15" y="12.5" width="3" height="3" fill="none" stroke="#1a1aa0" stroke-width="1"/><rect x="15" y="16.5" width="3" height="3" fill="none" stroke="#1a1aa0" stroke-width="1"/></svg>
<svg class="a" style="left:227px;top:148px" width="20" height="20" viewBox="0 0 20 20"><rect x="1" y="2" width="9" height="8" fill="#d06060" stroke="#802020" stroke-width="0.8"/><rect x="4" y="5" width="7" height="6" fill="#e08080" stroke="#802020" stroke-width="0.8"/><path d="M12,9 V17 H16 M12,13 H16" fill="none" stroke="#1a1aa0" stroke-width="1.2"/><rect x="16" y="11.5" width="3" height="3" fill="none" stroke="#1a1aa0" stroke-width="1"/><rect x="16" y="15.5" width="3" height="3" fill="none" stroke="#1a1aa0" stroke-width="1"/></svg>
<div class="a" style="left:256px;top:147px;width:1px;height:20px;background:#e0e0e0"></div>
<div class="a" style="left:269px;top:146px;width:137px;height:22px;border:1px solid #777;background:#fff"></div>
<div class="a" style="left:272px;top:150px;font-size:12px;color:#111;white-space:nowrap;">Tool Path</div>
<div class="a" style="left:393.5px;top:155px;width:0;height:0;border-left:3.5px solid transparent;border-right:3.5px solid transparent;border-top:3.5px solid #222"></div>
<svg class="a" style="left:413px;top:148px" width="20" height="20" viewBox="0 0 20 20"><path d="M1,2 H13 L8,8 V14 L6,12 V8 Z" fill="none" stroke="#bbb" stroke-width="1"/><path d="M11,15 A3,3 0 1 0 14,12 M13,10 L11,12 L13,14" fill="none" stroke="#bbb" stroke-width="1"/></svg>
<div class="a" style="left:440px;top:146px;width:143px;height:22px;border:1px solid #777;background:#fff"></div>
<div class="a" style="left:443px;top:150px;font-size:12px;color:#111;white-space:nowrap;">Entire Assembly</div>
<div class="a" style="left:570.5px;top:155px;width:0;height:0;border-left:3.5px solid transparent;border-right:3.5px solid transparent;border-top:3.5px solid #222"></div>
<svg class="a" style="left:590px;top:148px" width="22" height="20" viewBox="0 0 22 20"><path d="M1,2 H13 L8,8 V14 L6,12 V8 Z" fill="none" stroke="#666" stroke-width="1"/><rect x="8" y="8" width="8" height="10" fill="#fff" stroke="#555" stroke-width="1"/><path d="M10,11 H14 M10,14 H14" stroke="#555" stroke-width="0.8"/></svg>
<div class="a" style="left:611px;top:155px;width:0;height:0;border-left:3px solid transparent;border-right:3px solid transparent;border-top:3px solid #222"></div>
<svg class="a" style="left:627px;top:148px" width="20" height="20" viewBox="0 0 20 20"><path d="M4,2 H1 V16 H4 M14,2 H17 V8" fill="none" stroke="#e08a30" stroke-width="1.2"/><circle cx="9" cy="8" r="3" fill="none" stroke="#333" stroke-width="1"/><path d="M5,8 H13 M9,4 V12" stroke="#333" stroke-width="1"/><path d="M12,14 A3,3 0 1 0 15,11" fill="none" stroke="#555" stroke-width="1"/></svg>
<svg class="a" style="left:651px;top:149px" width="20" height="18" viewBox="0 0 20 18"><path d="M5,2 H14 L18,9 L14,16 H5 L1,9 Z" fill="none" stroke="#20a8c8" stroke-width="1.3"/></svg>
<svg class="a" style="left:676px;top:148px" width="20" height="20" viewBox="0 0 20 20"><path d="M2,6 L8,3 L14,6 V12 L8,15 L2,12 Z M2,6 L8,9 L14,6 M8,9 V15" fill="none" stroke="#e08a30" stroke-width="1.1"/><circle cx="14" cy="14" r="3.5" fill="none" stroke="#333" stroke-width="1"/><path d="M9,14 H19 M14,9 V19" stroke="#333" stroke-width="1"/></svg>
<svg class="a" style="left:701px;top:148px" width="20" height="20" viewBox="0 0 20 20"><rect x="2" y="2" width="9" height="9" fill="none" stroke="#e08a30" stroke-width="1.2"/><circle cx="12" cy="13" r="3.5" fill="none" stroke="#333" stroke-width="1.1"/><path d="M7,13 H17 M12,8 V18" stroke="#333" stroke-width="1.1"/></svg>
<div class="a" style="left:727px;top:155px;width:0;height:0;border-left:3px solid transparent;border-right:3px solid transparent;border-top:3px solid #222"></div>
<svg class="a" style="left:744px;top:148px" width="20" height="20" viewBox="0 0 20 20"><path d="M2,7 L10,3 L18,7 V13 L10,17 L2,13 Z" fill="#ddd" stroke="#bbb" stroke-width="1"/><path d="M6,11 L14,9" stroke="#e8a060" stroke-width="1"/></svg>
<svg class="a" style="left:768px;top:148px" width="20" height="20" viewBox="0 0 20 20"><path d="M3,6 L9,3 L16,6 V14 L9,17 L3,14 Z" fill="#e0e0e0" stroke="#bbb" stroke-width="1"/><path d="M9,6 V17 M9,10 L16,8" stroke="#e8a060" stroke-width="1"/></svg>
<div class="a" style="left:800px;top:147px;width:1px;height:20px;background:#e0e0e0"></div>
<svg class="a" style="left:806px;top:148px" width="20" height="20" viewBox="0 0 20 20"><text x="6" y="6" font-size="6" font-family="Liberation Sans" font-weight="bold" fill="#333">MCS</text><path d="M2,3 V13 L9,9" fill="none" stroke="#30a030" stroke-width="1"/><path d="M2,13 L7,17" stroke="#e02020" stroke-width="1"/><path d="M7.6000000000000005,14 Q13,9.2 18.4,14 Q13,18.8 7.6000000000000005,14 Z" fill="#fff" stroke="#333" stroke-width="1.3"/><circle cx="13" cy="14" r="1.7999999999999998" fill="#333"/></svg>
<svg class="a" style="left:831px;top:148px" width="20" height="20" viewBox="0 0 20 20"><path d="M2,2 V12 L9,8" fill="none" stroke="#30a030" stroke-width="1"/><path d="M2,12 L7,16" stroke="#e02020" stroke-width="1"/><path d="M7.6000000000000005,13 Q13,8.2 18.4,13 Q13,17.8 7.6000000000000005,13 Z" fill="#fff" stroke="#333" stroke-width="1.3"/><circle cx="13" cy="13" r="1.7999999999999998" fill="#333"/></svg>
<svg class="a" style="left:855px;top:148px" width="20" height="20" viewBox="0 0 20 20"><path d="M2,18 L18,2" stroke="#333" stroke-width="1.2"/><path d="M5.5,8 Q10,4.0 14.5,8 Q10,12.0 5.5,8 Z" fill="#fff" stroke="#333" stroke-width="1.3"/><circle cx="10" cy="8" r="1.5" fill="#333"/><path d="M5.6000000000000005,14 Q11,9.2 16.4,14 Q11,18.8 5.6000000000000005,14 Z" fill="#fff" stroke="#333" stroke-width="1.3"/><circle cx="11" cy="14" r="1.7999999999999998" fill="#333"/></svg>
<div class="a" style="left:885px;top:147px;width:1px;height:20px;background:#e0e0e0"></div>
<div class="a" style="left:1909px;top:159px;width:0;height:0;border-left:3px solid transparent;border-right:3px solid transparent;border-top:3px solid #222"></div>
<div class="a" style="left:3px;top:340px;width:28px;height:44px;background:#fff"></div>
<svg class="a" style="left:6px;top:176px" width="18" height="18" viewBox="0 0 18 18"><circle cx="9" cy="9" r="5.5" fill="none" stroke="#333" stroke-width="2.2"/><circle cx="9" cy="9" r="7.5" fill="none" stroke="#333" stroke-width="1.4" stroke-dasharray="2.5 3.4"/></svg>
<svg class="a" style="left:6px;top:220px" width="22" height="24" viewBox="0 0 22 24"><path d="M2,8 L9,4 L16,8 V18 L9,22 L2,18 Z" fill="#e8e8e8" stroke="#444" stroke-width="1.2"/><path d="M2,8 L9,12 L16,8 M9,12 V22 M2,13 L9,17 L16,13" fill="none" stroke="#444" stroke-width="1"/></svg>
<svg class="a" style="left:5px;top:262px" width="24" height="26" viewBox="0 0 24 26"><path d="M2,8 L9,4 L15,7 V18 L9,22 L2,18 Z" fill="#ee8a2a" stroke="#666" stroke-width="1"/><path d="M2,14 L9,18 L15,15 V18 L9,22 L2,18 Z" fill="#eee"/><path d="M14,12 L23,18 V10 L14,16 Z" fill="none" stroke="#333" stroke-width="1.3"/></svg>
<svg class="a" style="left:5px;top:305px" width="24" height="24" viewBox="0 0 24 24"><path d="M3,12 L10,3 Q14,2 14,8 L20,12 Q22,16 18,19 L8,21 Q3,20 3,16 Z" fill="#c8c8c8" stroke="#555" stroke-width="1.1"/><ellipse cx="11" cy="15" rx="4" ry="2" fill="none" stroke="#555" stroke-width="1"/></svg>
<svg class="a" style="left:7px;top:349px" width="22" height="24" viewBox="0 0 22 24"><path d="M4,2 V22 M4,14 H9 M10,12 L16,18 H10 Z" fill="none" stroke="#1a4a90" stroke-width="1.4"/><path d="M3,3 H6 V10 H3 Z" fill="#3a70c0"/><path d="M8,4 H14 L9,7 H14 M9,9 H20" fill="none" stroke="#1a4a90" stroke-width="1.1"/></svg>
<svg class="a" style="left:5px;top:391px" width="24" height="24" viewBox="0 0 24 24"><path d="M2,4 L14,2 V16 L2,18 Z" fill="#f0d8a0" stroke="#e08a30" stroke-width="1"/><path d="M2,8 L14,6 M2,12 L14,10 M6,3 V17 M10,2.5 V16.5" stroke="#e08a30" stroke-width="0.8"/><path d="M8,14 L18,11 L22,15 V20 L12,23 L8,19 Z" fill="#2a6ae0"/><path d="M10,15 L18,12" stroke="#ee8a2a" stroke-width="2"/></svg>
<svg class="a" style="left:5px;top:433px" width="24" height="24" viewBox="0 0 24 24"><rect x="3" y="6" width="13" height="14" fill="#ddd" stroke="#555" stroke-width="1"/><rect x="6" y="9" width="5" height="7" fill="#fff" stroke="#777" stroke-width="0.8"/><circle cx="16" cy="4" r="3" fill="#ee8a2a"/><circle cx="21" cy="3" r="2.5" fill="#e04020"/><path d="M17,12 V20 H22" fill="none" stroke="#333" stroke-width="1.3"/></svg>
<svg class="a" style="left:7px;top:475px" width="20" height="24" viewBox="0 0 20 24"><path d="M3,6 L9,3 L16,5 V19 L10,22 L3,19 Z" fill="#eee" stroke="#555" stroke-width="1.1"/><path d="M9,3 V22 M3,6 L10,9 L16,6" fill="none" stroke="#555" stroke-width="1"/></svg>
<svg class="a" style="left:5px;top:517px" width="24" height="24" viewBox="0 0 24 24"><path d="M4,2 V20 M18,4 V22" stroke="#1a2ab0" stroke-width="1.3"/><circle cx="4" cy="5" r="2" fill="#1a2ab0"/><circle cx="4" cy="12" r="2" fill="#1a2ab0"/><circle cx="18" cy="6" r="2" fill="#1a2ab0"/><circle cx="18" cy="14" r="2" fill="#1a2ab0"/><path d="M9,8 L13,11 L9,14 Z M14,10 L10,13 L14,16 Z" fill="#ee6a20"/></svg>
<svg class="a" style="left:4px;top:570px" width="26" height="24" viewBox="0 0 26 24"><circle cx="10" cy="14" r="6.5" fill="#888"/><path d="M10,11 V18 M10,9 V10" stroke="#fff" stroke-width="1.6"/><path d="M15,5 A10,10 0 0 1 20,14 M17,3 A13,13 0 0 1 23,14" fill="none" stroke="#aaa" stroke-width="0.8"/></svg>
<svg class="a" style="left:5px;top:624px" width="24" height="26" viewBox="0 0 24 26"><rect x="1" y="2" width="22" height="22" fill="#fff" stroke="#555" stroke-width="1.1"/><path d="M1,5 H23" stroke="#555" stroke-width="1"/><circle cx="12" cy="14" r="7" fill="#2a90c0"/><path d="M8,12 Q12,10 15,13 Q13,17 10,17" fill="none" stroke="#60c0e0" stroke-width="1.3"/></svg>
<svg class="a" style="left:4px;top:677px" width="26" height="26" viewBox="0 0 26 26"><circle cx="13" cy="13" r="11" fill="none" stroke="#555" stroke-width="1.2"/><path d="M13,4 V13 H7 M13,1 V4 M13,22 V25 M1,13 H4 M22,13 H25" fill="none" stroke="#555" stroke-width="1.2"/></svg>
<svg class="a" style="left:6px;top:720px" width="22" height="26" viewBox="0 0 22 26"><rect x="1" y="1" width="5" height="22" fill="url(#rb)"/><defs><linearGradient id="rb" x1="0" y1="0" x2="0" y2="1"><stop offset="0" stop-color="#e02020"/><stop offset="0.4" stop-color="#30d030"/><stop offset="1" stop-color="#2040e0"/></linearGradient></defs><path d="M10,10 L19,22" stroke="#222" stroke-width="2"/></svg>
<svg class="a" style="left:5px;top:762px" width="24" height="24" viewBox="0 0 24 24"><rect x="3" y="6" width="5" height="15" fill="#3a80d0"/><path d="M3,9 L8,11 M3,14 L8,16" stroke="#a0c8f0" stroke-width="1"/><path d="M10,8 L22,6 M11,12 L21,10 M12,10 L20,22" fill="none" stroke="#222" stroke-width="1.3"/></svg>
<svg class="a" style="left:5px;top:804px" width="24" height="26" viewBox="0 0 24 26"><path d="M2,6 H8 V3 H15 V6 H22 V22 H2 Z" fill="#f4f4f4" stroke="#555" stroke-width="1.1"/><path d="M7,10 L17,19 M17,10 L7,19" stroke="#3a7a8a" stroke-width="2.2"/></svg>
<svg class="a" style="left:5px;top:847px" width="24" height="26" viewBox="0 0 24 26"><rect x="1" y="2" width="18" height="18" fill="#888" stroke="#555" stroke-width="1"/><path d="M3,18 L7,6 L12,12 L17,4 V18 Z" fill="#ddd"/><path d="M13,14 L18,12 L23,14 V22 L18,24 L13,22 Z" fill="#fff" stroke="#333" stroke-width="1.1"/></svg>
<svg class="a" style="left:5px;top:889px" width="24" height="26" viewBox="0 0 24 26"><rect x="1" y="6" width="13" height="14" fill="#ddd" stroke="#222" stroke-width="1.3"/><rect x="4" y="9" width="5" height="7" fill="#fff" stroke="#333" stroke-width="0.8"/><circle cx="17" cy="6" r="4" fill="#e0e060"/><path d="M14,12 V20 H22" fill="none" stroke="#222" stroke-width="1.6"/></svg>
<svg class="a" style="left:4px;top:930px" width="26" height="26" viewBox="0 0 26 26"><circle cx="7" cy="7" r="4.5" fill="#30b030"/><circle cx="17" cy="7" r="4.5" fill="#2a40d0"/><circle cx="7" cy="16" r="4.5" fill="#e8e020"/><circle cx="16" cy="16" r="4.5" fill="#d02020"/><path d="M15,14 L20,12 L25,14 V22 L20,24 L15,22 Z" fill="#fff" stroke="#333" stroke-width="1.1"/></svg>
<div class="a" style="left:42px;top:179px;font-size:12px;color:#333;white-space:nowrap;">Operation Navigator - Program Order</div>
<div class="a" style="left:265px;top:180px;width:12px;height:12px;border:1.5px solid #222;border-top-width:2px;background:#fff"></div>
<div class="a" style="left:38px;top:200px;width:246px;height:846px;border:1px solid #d8d8d8;background:#fff"></div>
<div class="a" style="left:39px;top:201px;width:244px;height:19px;background:#f0f0f0;border-bottom:1px solid #e2e2e2"></div>
<div class="a" style="left:45px;top:203px;font-size:12px;color:#222;white-space:nowrap;">Name</div>
<div class="a" style="left:39px;top:240px;width:244px;height:20px;background:#f6f6f6;border-top:1px solid #ededed"></div><div class="a" style="left:39px;top:280px;width:244px;height:20px;background:#f6f6f6;border-top:1px solid #ededed"></div><div class="a" style="left:39px;top:320px;width:244px;height:20px;background:#f6f6f6;border-top:1px solid #ededed"></div><div class="a" style="left:39px;top:360px;width:244px;height:20px;background:#f6f6f6;border-top:1px solid #ededed"></div><div class="a" style="left:39px;top:400px;width:244px;height:20px;background:#f6f6f6;border-top:1px solid #ededed"></div><div class="a" style="left:39px;top:440px;width:244px;height:20px;background:#f6f6f6;border-top:1px solid #ededed"></div><div class="a" style="left:39px;top:480px;width:244px;height:20px;background:#f6f6f6;border-top:1px solid #ededed"></div><div class="a" style="left:39px;top:520px;width:244px;height:20px;background:#f6f6f6;border-top:1px solid #ededed"></div><div class="a" style="left:39px;top:560px;width:244px;height:20px;background:#f6f6f6;border-top:1px solid #ededed"></div><div class="a" style="left:39px;top:600px;width:244px;height:20px;background:#f6f6f6;border-top:1px solid #ededed"></div><div class="a" style="left:39px;top:640px;width:244px;height:20px;background:#f6f6f6;border-top:1px solid #ededed"></div><div class="a" style="left:39px;top:680px;width:244px;height:20px;background:#f6f6f6;border-top:1px solid #ededed"></div><div class="a" style="left:39px;top:720px;width:244px;height:20px;background:#f6f6f6;border-top:1px solid #ededed"></div><div class="a" style="left:39px;top:760px;width:244px;height:20px;background:#f6f6f6;border-top:1px solid #ededed"></div><div class="a" style="left:39px;top:800px;width:244px;height:20px;background:#f6f6f6;border-top:1px solid #ededed"></div><div class="a" style="left:39px;top:840px;width:244px;height:20px;background:#f6f6f6;border-top:1px solid #ededed"></div><div class="a" style="left:39px;top:880px;width:244px;height:20px;background:#f6f6f6;border-top:1px solid #ededed"></div><div class="a" style="left:39px;top:920px;width:244px;height:20px;background:#f6f6f6;border-top:1px solid #ededed"></div><div class="a" style="left:39px;top:960px;width:244px;height:20px;background:#f6f6f6;border-top:1px solid #ededed"></div><div class="a" style="left:39px;top:1000px;width:244px;height:20px;background:#f6f6f6;border-top:1px solid #ededed"></div>
<div class="a" style="left:42px;top:222px;font-size:12px;color:#222;white-space:nowrap;">NC_PROGRAM</div>
<div class="a" style="left:49px;top:250px;width:1px;height:20px;border-left:1px dotted #999"></div>
<div class="a" style="left:49px;top:250px;width:10px;height:1px;border-top:1px dotted #999"></div>
<div class="a" style="left:45px;top:265px;width:9px;height:9px;border:1px solid #bbb;background:#fff"></div>
<div class="a" style="left:47px;top:269px;width:5px;height:1px;background:#333"></div>
<div class="a" style="left:68px;top:281px;width:1px;height:10px;border-left:1px dotted #999"></div>
<div class="a" style="left:68px;top:290px;width:10px;height:1px;border-top:1px dotted #999"></div>
<svg class="a" style="left:59px;top:243px" width="16" height="14" viewBox="0 0 16 14"><path d="M1,3 H6 L7,1 H11 V3 H15 V13 H1 Z" fill="#f8e8a0" stroke="#a08040" stroke-width="0.8"/><rect x="6" y="5" width="8" height="7" fill="#e8e0f8" stroke="#3a2ab0" stroke-width="0.9"/><path d="M8,7 H12 M8,9 H12" stroke="#3a2ab0" stroke-width="0.8"/></svg>
<div class="a" style="left:78px;top:242px;font-size:12px;color:#222;white-space:nowrap;">Unused Items</div>
<div class="a" style="left:66px;top:262px;width:3px;height:14px;background:#f0c040"></div>
<svg class="a" style="left:75px;top:263px" width="16" height="14" viewBox="0 0 16 14"><path d="M1,3 H6 L7,1 H11 V3 H15 V13 H1 Z" fill="#f8e8a0" stroke="#a08040" stroke-width="0.8"/><rect x="6" y="5" width="8" height="7" fill="#e8e0f8" stroke="#3a2ab0" stroke-width="0.9"/><path d="M8,7 H12 M8,9 H12" stroke="#3a2ab0" stroke-width="0.8"/></svg>
<div class="a" style="left:94px;top:262px;font-size:12px;color:#222;white-space:nowrap;">PROGRAM</div>
<div class="a" style="left:85px;top:281px;width:3px;height:16px;background:#f0c040"></div>
<div class="a" style="left:111px;top:280px;width:172px;height:19px;background:#86bdd2"></div>
<svg class="a" style="left:94px;top:281px" width="18" height="17" viewBox="0 0 18 17"><rect x="1" y="1" width="3" height="9" fill="#5a6ac0"/><path d="M3,8 L10,5 L16,8 V13 L9,16 L3,13 Z" fill="#ccc" stroke="#555" stroke-width="0.9"/><path d="M6,9 Q10,7 13,10" fill="none" stroke="#555" stroke-width="0.9"/></svg>
<div class="a" style="left:112px;top:282px;font-size:12px;color:#111;white-space:nowrap;font-weight:bold">FLOOR_WALL</div>
<div class="a" style="left:39px;top:1028px;width:244px;height:17px;background:#efefef"></div>
<div class="a" style="left:57px;top:1030px;width:57px;height:14px;background:#cdcdcd"></div>
<svg class="a" style="left:43px;top:1031px" width="8" height="12" viewBox="0 0 8 12"><path d="M6,2 L2,6 L6,10" fill="none" stroke="#555" stroke-width="1.5"/></svg>
<svg class="a" style="left:271px;top:1031px" width="8" height="12" viewBox="0 0 8 12"><path d="M2,2 L6,6 L2,10" fill="none" stroke="#555" stroke-width="1.5"/></svg>
<div class="a" style="left:38px;top:1046px;width:246px;height:3px;background:#e0e0e0;border-bottom:1px solid #c8c8c8"></div>
<div class="a" style="left:294px;top:171px;width:1px;height:888px;background:#a8a8a8"></div>
<svg class="a" style="left:301px;top:173px" width="18" height="18" viewBox="0 0 18 18"><path d="M2,9 L9,2 L16,9 M4,7 V16 H14 V7 M7,16 V11 H11 V16" fill="none" stroke="#555" stroke-width="1.2"/></svg>
<div class="a" style="left:321px;top:176px;font-size:12px;color:#333;white-space:nowrap;">Welcome Page</div>
<div class="a" style="left:422px;top:171px;width:138px;height:24px;background:#0f6890"></div>
<svg class="a" style="left:426px;top:173px" width="18" height="18" viewBox="0 0 18 18"><path d="M2,2 H6 V6 H2 V10 H6 V14 H2" fill="none" stroke="#fff" stroke-width="1.1"/><path d="M9,10 A4,4 0 0 1 16,9 M9,13 A4,4 0 0 0 16,14 M15,7 V10 H12 M10,16 V13 H13" fill="none" stroke="#fff" stroke-width="1.1"/></svg>
<div class="a" style="left:447px;top:176px;font-size:12px;color:#fff;white-space:nowrap;">Machinery.prt</div>
<svg class="a" style="left:527px;top:176px" width="12" height="13" viewBox="0 0 12 13"><path d="M1,1 H7 L10,4 V12 H1 Z" fill="none" stroke="#fff" stroke-width="1.3"/><path d="M5,8 L11,2" stroke="#fff" stroke-width="1.5"/></svg>
<svg class="a" style="left:543px;top:177px" width="11" height="11" viewBox="0 0 11 11"><path d="M1,1 L10,10 M10,1 L1,10" stroke="#fff" stroke-width="2"/></svg>
<div class="a" style="left:295px;top:194px;width:1590px;height:2px;background:#0f6890"></div>
<svg class="a" style="left:1891px;top:181px" width="26" height="26" viewBox="0 0 26 26"><path d="M3,3 H22 M3,1 V5 M22,1 V5" stroke="#e08a30" stroke-width="1"/><rect x="2" y="8" width="18" height="10" fill="#fff" stroke="#444" stroke-width="1.1"/><path d="M4,18 L11,8 M9,18 L16,8 M14,18 L20,10" stroke="#444" stroke-width="1.4"/><path d="M10.7,19 Q17,13.4 23.3,19 Q17,24.6 10.7,19 Z" fill="#fff" stroke="#333" stroke-width="1.3"/><circle cx="17" cy="19" r="2.0999999999999996" fill="#333"/></svg>
<svg class="a" style="left:1891px;top:214px" width="26" height="26" viewBox="0 0 26 26"><path d="M2,2 H8 V8.0 H2 V14.0 H8 V20 H2" fill="none" stroke="#444" stroke-width="1.1"/><path d="M9.25,17 Q16,11.0 22.75,17 Q16,23.0 9.25,17 Z" fill="#fff" stroke="#333" stroke-width="1.3"/><circle cx="16" cy="17" r="2.25" fill="#333"/></svg>
<svg class="a" style="left:1891px;top:246px" width="26" height="26" viewBox="0 0 26 26"><text x="9" y="7" font-size="7" font-family="Liberation Sans" font-weight="bold" fill="#333">MCS</text><path d="M2,4 V16 L10,12" fill="none" stroke="#30a030" stroke-width="1"/><path d="M2,16 L8,21" stroke="#e02020" stroke-width="1"/><path d="M9.7,18 Q16,12.4 22.3,18 Q16,23.6 9.7,18 Z" fill="#fff" stroke="#333" stroke-width="1.3"/><circle cx="16" cy="18" r="2.0999999999999996" fill="#333"/></svg>
<svg class="a" style="left:1891px;top:278px" width="26" height="26" viewBox="0 0 26 26"><path d="M2,12 H10 M4,15 H12 M3,18 H11" stroke="#8ac0f0" stroke-width="1.2"/><path d="M15,8 L17,13 L22,13 L18,16 L20,21 L15,18 L10,21 L12,16 L8,13 L13,13 Z" fill="#f0e040" stroke="#c0a020" stroke-width="0.6"/><path d="M11,9 L18,3 L21,5 L15,11 Z" fill="#e0c090" stroke="#3a3a90" stroke-width="0.8"/></svg>
<svg class="a" style="left:1891px;top:310px" width="26" height="26" viewBox="0 0 26 26"><path d="M2,8 L8,5 L14,7 V15 L8,18 L2,15 Z" fill="#3a60e0"/><circle cx="6" cy="12" r="3" fill="#e04020"/><path d="M17,10 V22 M17,14 H21 M17,19 H21" fill="none" stroke="#1a2ab0" stroke-width="1.2"/><rect x="20" y="12" width="3" height="3" fill="none" stroke="#1a2ab0"/><rect x="20" y="17" width="3" height="3" fill="none" stroke="#1a2ab0"/></svg>
<svg class="a" style="left:1891px;top:342px" width="26" height="26" viewBox="0 0 26 26"><path d="M2,12 H10 M4,15 H12 M3,18 H11" stroke="#8ac0f0" stroke-width="1.2"/><path d="M15,8 L17,13 L22,13 L18,16 L20,21 L15,18 L10,21 L12,16 L8,13 L13,13 Z" fill="#f0e040" stroke="#c0a020" stroke-width="0.6"/><path d="M11,9 L18,3 L21,5 L15,11 Z" fill="#e0c090" stroke="#3a3a90" stroke-width="0.8"/></svg>
<svg class="a" style="left:1891px;top:374px" width="26" height="26" viewBox="0 0 26 26"><path d="M2,2 H8 V8.0 H2 V14.0 H8 V20 H2" fill="none" stroke="#444" stroke-width="1.1"/><path d="M12,16 A5,5 0 0 1 21,15 M21,20 A5,5 0 0 1 12,21 M20,12 V15 H17 M13,24 V21 H16" fill="none" stroke="#444" stroke-width="1.1"/></svg>
<svg class="a" style="left:1891px;top:406px" width="26" height="26" viewBox="0 0 26 26"><rect x="2" y="2" width="6" height="16" fill="#ee8a2a"/><path d="M2,9 L8,5" stroke="#f7d0a8" stroke-width="1.5"/><path d="M2,15 L8,11" stroke="#f7d0a8" stroke-width="1.5"/><rect x="2" y="2" width="6" height="16" fill="none" stroke="#b05a10" stroke-width="0.8"/><path d="M11,9 H22 M11,12 H20" stroke="#888" stroke-width="1"/><path d="M13,14 L22,23 M22,14 L13,23" stroke="#333" stroke-width="2"/></svg>
<svg class="a" style="left:1891px;top:438px" width="26" height="26" viewBox="0 0 26 26"><rect x="2" y="2" width="6" height="16" fill="#ee8a2a"/><path d="M2,9 L8,5" stroke="#f7d0a8" stroke-width="1.5"/><path d="M2,15 L8,11" stroke="#f7d0a8" stroke-width="1.5"/><rect x="2" y="2" width="6" height="16" fill="none" stroke="#b05a10" stroke-width="0.8"/><path d="M11,9 H22 M11,12 H20" stroke="#888" stroke-width="1"/><rect x="12" y="13" width="7" height="8" fill="#fff" stroke="#333" stroke-width="1.1"/><rect x="15" y="16" width="7" height="8" fill="#fff" stroke="#333" stroke-width="1.1"/></svg>
<svg class="a" style="left:1891px;top:470px" width="26" height="26" viewBox="0 0 26 26"><path d="M2,3 H8 V9.0 H2 V15.0 H8 V21 H2" fill="none" stroke="#333" stroke-width="1.2"/><circle cx="16" cy="10" r="4" fill="none" stroke="#d02040" stroke-width="1.2"/><path d="M10,10 H22 M16,4 V16" stroke="#d02040" stroke-width="1"/></svg>
<div class="a" style="left:1888px;top:505px;width:30px;height:1px;background:#e6e6e6"></div>
<svg class="a" style="left:1892px;top:1045px" width="8" height="10" viewBox="0 0 8 10"><path d="M6,1 L1,5 L6,9 Z" fill="#222"/></svg>
<div id="status" class="a"><div class="a" style="left:3px;top:3px;font-size:11.7px;color:#111;-webkit-text-stroke:0.25px #111">Edit objects in the Operation Navigator or use Insert to create new objects</div></div>
</body></html>
